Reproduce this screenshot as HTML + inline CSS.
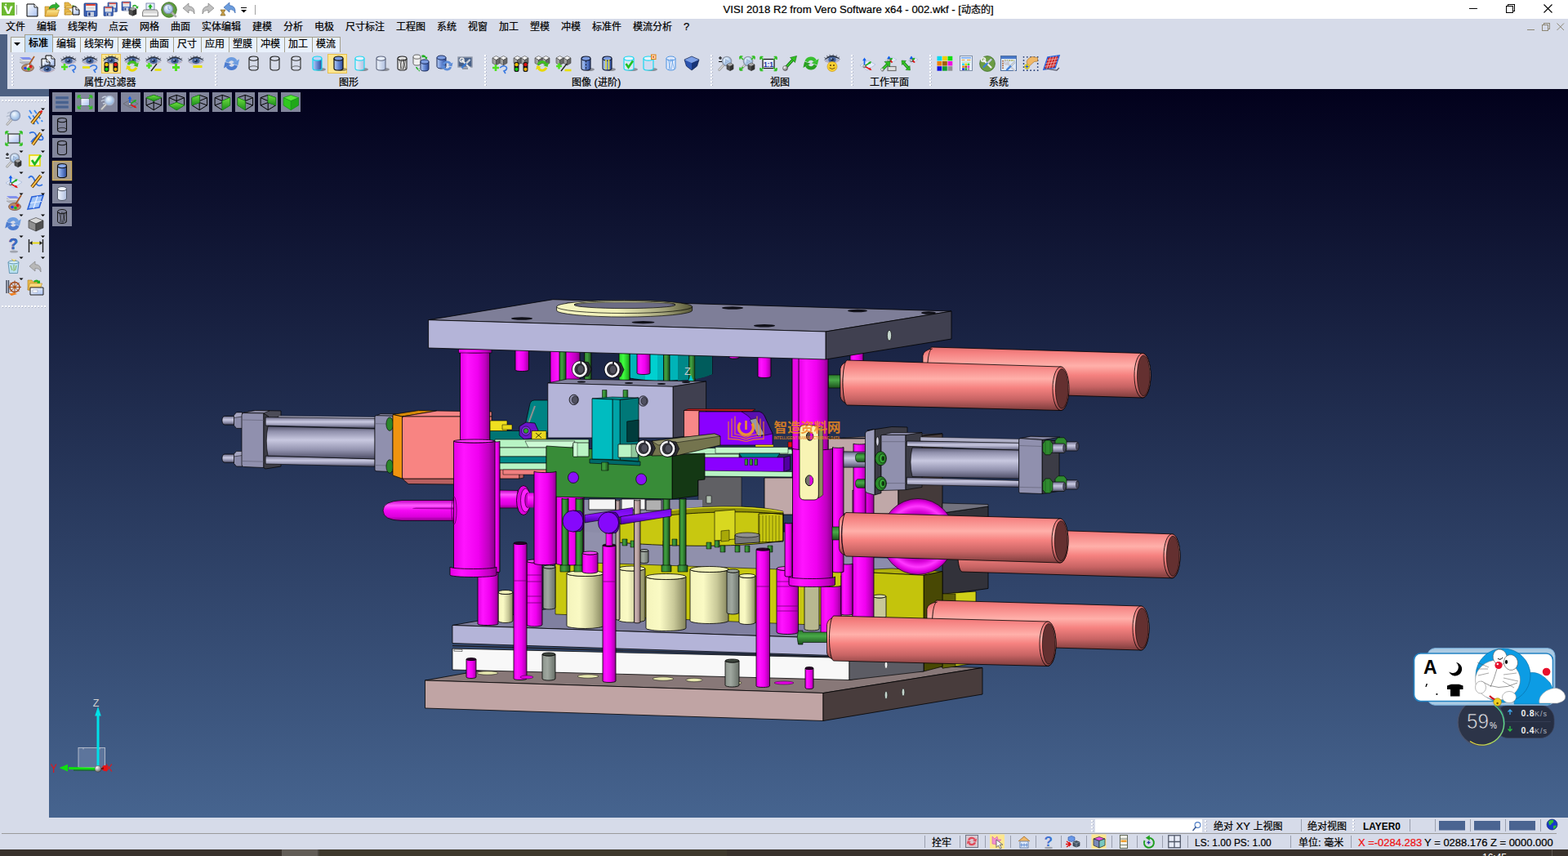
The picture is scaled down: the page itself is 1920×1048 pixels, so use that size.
<!DOCTYPE html>
<html lang="zh-CN"><head><meta charset="utf-8"><title>VISI 2018 R2 from Vero Software x64 - 002.wkf</title>
<style>
html,body{margin:0;padding:0;background:#d6dbe9;overflow:hidden}
body{width:1920px;height:1048px;position:relative;font-family:"Liberation Sans","Noto Sans CJK SC",sans-serif}
svg text{font-family:"Liberation Sans","Noto Sans CJK SC",sans-serif}
#app{position:absolute;left:0;top:0;width:1920px;height:1048px;display:block}
</style></head><body>
<svg id="app" width="1920" height="1048" viewBox="0 0 1920 1048">
<rect x="0" y="0" width="1920" height="23" fill="#fff"/>
<rect x="0" y="23" width="1920" height="86" fill="#d6dbe9"/>
<rect x="0" y="42" width="9" height="67" fill="#4d6082"/>
<rect x="0" y="109" width="60" height="9" fill="#4d6082"/>
<rect x="0" y="118" width="60" height="882" fill="#d6dbe9"/>
<rect x="0" y="1000" width="1920" height="40" fill="#d6dbe9"/>
<g fill="#000" stroke="#000" stroke-width="0.22"><text x="885.50" y="16.00" font-size="12.5" textLength="291.52" lengthAdjust="spacingAndGlyphs">VISI&#160;2018&#160;R2&#160;from&#160;Vero&#160;Software&#160;x64&#160;-&#160;002.wkf&#160;-&#160;[</text><text x="1177.02" y="16.00" font-size="12">动态的</text><text x="1213.02" y="16.00" font-size="12.5" textLength="3.64" lengthAdjust="spacingAndGlyphs">]</text></g>
<g stroke="#000" stroke-width="1" fill="none" shape-rendering="crispEdges"><path d="M1799 10.5H1809"/><path d="M1846.5 7.5V5.5H1854.5V13.5H1852.5"/><rect x="1844.5" y="7.5" width="8" height="8"/></g><path d="M1890.5 5.5L1900.5 15.5M1900.5 5.5L1890.5 15.5" stroke="#000" stroke-width="1.1" fill="none"/>
<g stroke="#8c8674" stroke-width="1" fill="none" shape-rendering="crispEdges"><path d="M1870 36.5H1879"/><path d="M1890.5 30.5V28.5H1897.5V35.5H1895.5"/><rect x="1888.5" y="30.5" width="7" height="7"/></g><path d="M1906.5 28.5L1915 37M1915 28.5L1906.5 37" stroke="#8c8674" stroke-width="1" fill="none"/>
<g fill="#000" stroke="#000" stroke-width="0.22"><text x="7.00" y="37.00" font-size="12">文件</text></g>
<g fill="#000" stroke="#000" stroke-width="0.22"><text x="45.00" y="37.00" font-size="12">编辑</text></g>
<g fill="#000" stroke="#000" stroke-width="0.22"><text x="83.00" y="37.00" font-size="12">线架构</text></g>
<g fill="#000" stroke="#000" stroke-width="0.22"><text x="133.00" y="37.00" font-size="12">点云</text></g>
<g fill="#000" stroke="#000" stroke-width="0.22"><text x="171.00" y="37.00" font-size="12">网格</text></g>
<g fill="#000" stroke="#000" stroke-width="0.22"><text x="209.00" y="37.00" font-size="12">曲面</text></g>
<g fill="#000" stroke="#000" stroke-width="0.22"><text x="247.00" y="37.00" font-size="12">实体编辑</text></g>
<g fill="#000" stroke="#000" stroke-width="0.22"><text x="309.00" y="37.00" font-size="12">建模</text></g>
<g fill="#000" stroke="#000" stroke-width="0.22"><text x="347.00" y="37.00" font-size="12">分析</text></g>
<g fill="#000" stroke="#000" stroke-width="0.22"><text x="385.00" y="37.00" font-size="12">电极</text></g>
<g fill="#000" stroke="#000" stroke-width="0.22"><text x="423.00" y="37.00" font-size="12">尺寸标注</text></g>
<g fill="#000" stroke="#000" stroke-width="0.22"><text x="485.00" y="37.00" font-size="12">工程图</text></g>
<g fill="#000" stroke="#000" stroke-width="0.22"><text x="535.00" y="37.00" font-size="12">系统</text></g>
<g fill="#000" stroke="#000" stroke-width="0.22"><text x="573.00" y="37.00" font-size="12">视窗</text></g>
<g fill="#000" stroke="#000" stroke-width="0.22"><text x="611.00" y="37.00" font-size="12">加工</text></g>
<g fill="#000" stroke="#000" stroke-width="0.22"><text x="649.00" y="37.00" font-size="12">塑模</text></g>
<g fill="#000" stroke="#000" stroke-width="0.22"><text x="687.00" y="37.00" font-size="12">冲模</text></g>
<g fill="#000" stroke="#000" stroke-width="0.22"><text x="725.00" y="37.00" font-size="12">标准件</text></g>
<g fill="#000" stroke="#000" stroke-width="0.22"><text x="775.00" y="37.00" font-size="12">模流分析</text></g>
<g fill="#000" stroke="#000" stroke-width="0.22"><text x="837.00" y="37.00" font-size="12.5" textLength="7.20" lengthAdjust="spacingAndGlyphs">?</text></g>
<rect x="13.5" y="45.5" width="17" height="19" fill="#e9f1fc" stroke="#a39f8c"/>
<path d="M17 52h8l-4 4z" fill="#000"/>
<rect x="30.5" y="42.5" width="34" height="22" fill="#c0dbf8" stroke="#a39f8c"/>
<g fill="#000" stroke="#000" stroke-width="0.0"><text x="35.00" y="57.00" font-size="12" font-weight="bold">标准</text></g>
<rect x="64.5" y="45.5" width="34" height="19" fill="#e9f1fc" stroke="#a39f8c"/>
<g fill="#000" stroke="#000" stroke-width="0.22"><text x="69.00" y="58.00" font-size="12">编辑</text></g>
<rect x="98.5" y="45.5" width="46" height="19" fill="#e9f1fc" stroke="#a39f8c"/>
<g fill="#000" stroke="#000" stroke-width="0.22"><text x="103.00" y="58.00" font-size="12">线架构</text></g>
<rect x="144.5" y="45.5" width="34" height="19" fill="#e9f1fc" stroke="#a39f8c"/>
<g fill="#000" stroke="#000" stroke-width="0.22"><text x="149.00" y="58.00" font-size="12">建模</text></g>
<rect x="178.5" y="45.5" width="34" height="19" fill="#e9f1fc" stroke="#a39f8c"/>
<g fill="#000" stroke="#000" stroke-width="0.22"><text x="183.00" y="58.00" font-size="12">曲面</text></g>
<rect x="212.5" y="45.5" width="34" height="19" fill="#e9f1fc" stroke="#a39f8c"/>
<g fill="#000" stroke="#000" stroke-width="0.22"><text x="217.00" y="58.00" font-size="12">尺寸</text></g>
<rect x="246.5" y="45.5" width="34" height="19" fill="#e9f1fc" stroke="#a39f8c"/>
<g fill="#000" stroke="#000" stroke-width="0.22"><text x="251.00" y="58.00" font-size="12">应用</text></g>
<rect x="280.5" y="45.5" width="34" height="19" fill="#e9f1fc" stroke="#a39f8c"/>
<g fill="#000" stroke="#000" stroke-width="0.22"><text x="285.00" y="58.00" font-size="12">塑膜</text></g>
<rect x="314.5" y="45.5" width="34" height="19" fill="#e9f1fc" stroke="#a39f8c"/>
<g fill="#000" stroke="#000" stroke-width="0.22"><text x="319.00" y="58.00" font-size="12">冲模</text></g>
<rect x="348.5" y="45.5" width="34" height="19" fill="#e9f1fc" stroke="#a39f8c"/>
<g fill="#000" stroke="#000" stroke-width="0.22"><text x="353.00" y="58.00" font-size="12">加工</text></g>
<rect x="382.5" y="45.5" width="34" height="19" fill="#e9f1fc" stroke="#a39f8c"/>
<g fill="#000" stroke="#000" stroke-width="0.22"><text x="387.00" y="58.00" font-size="12">模流</text></g>
<rect x="12" y="64" width="1908" height="45" fill="#d6dbe9"/>
<rect x="14" y="67" width="2" height="2" fill="#fff"/><rect x="16" y="68" width="1" height="1" fill="#a6abbd"/><rect x="14" y="71" width="2" height="2" fill="#fff"/><rect x="16" y="72" width="1" height="1" fill="#a6abbd"/><rect x="14" y="75" width="2" height="2" fill="#fff"/><rect x="16" y="76" width="1" height="1" fill="#a6abbd"/><rect x="14" y="79" width="2" height="2" fill="#fff"/><rect x="16" y="80" width="1" height="1" fill="#a6abbd"/><rect x="14" y="83" width="2" height="2" fill="#fff"/><rect x="16" y="84" width="1" height="1" fill="#a6abbd"/><rect x="14" y="87" width="2" height="2" fill="#fff"/><rect x="16" y="88" width="1" height="1" fill="#a6abbd"/><rect x="14" y="91" width="2" height="2" fill="#fff"/><rect x="16" y="92" width="1" height="1" fill="#a6abbd"/><rect x="14" y="95" width="2" height="2" fill="#fff"/><rect x="16" y="96" width="1" height="1" fill="#a6abbd"/><rect x="14" y="99" width="2" height="2" fill="#fff"/><rect x="16" y="100" width="1" height="1" fill="#a6abbd"/><rect x="14" y="103" width="2" height="2" fill="#fff"/><rect x="16" y="104" width="1" height="1" fill="#a6abbd"/>
<rect x="263" y="67" width="2" height="2" fill="#fff"/><rect x="265" y="68" width="1" height="1" fill="#a6abbd"/><rect x="263" y="71" width="2" height="2" fill="#fff"/><rect x="265" y="72" width="1" height="1" fill="#a6abbd"/><rect x="263" y="75" width="2" height="2" fill="#fff"/><rect x="265" y="76" width="1" height="1" fill="#a6abbd"/><rect x="263" y="79" width="2" height="2" fill="#fff"/><rect x="265" y="80" width="1" height="1" fill="#a6abbd"/><rect x="263" y="83" width="2" height="2" fill="#fff"/><rect x="265" y="84" width="1" height="1" fill="#a6abbd"/><rect x="263" y="87" width="2" height="2" fill="#fff"/><rect x="265" y="88" width="1" height="1" fill="#a6abbd"/><rect x="263" y="91" width="2" height="2" fill="#fff"/><rect x="265" y="92" width="1" height="1" fill="#a6abbd"/><rect x="263" y="95" width="2" height="2" fill="#fff"/><rect x="265" y="96" width="1" height="1" fill="#a6abbd"/><rect x="263" y="99" width="2" height="2" fill="#fff"/><rect x="265" y="100" width="1" height="1" fill="#a6abbd"/><rect x="263" y="103" width="2" height="2" fill="#fff"/><rect x="265" y="104" width="1" height="1" fill="#a6abbd"/>
<rect x="593" y="67" width="2" height="2" fill="#fff"/><rect x="595" y="68" width="1" height="1" fill="#a6abbd"/><rect x="593" y="71" width="2" height="2" fill="#fff"/><rect x="595" y="72" width="1" height="1" fill="#a6abbd"/><rect x="593" y="75" width="2" height="2" fill="#fff"/><rect x="595" y="76" width="1" height="1" fill="#a6abbd"/><rect x="593" y="79" width="2" height="2" fill="#fff"/><rect x="595" y="80" width="1" height="1" fill="#a6abbd"/><rect x="593" y="83" width="2" height="2" fill="#fff"/><rect x="595" y="84" width="1" height="1" fill="#a6abbd"/><rect x="593" y="87" width="2" height="2" fill="#fff"/><rect x="595" y="88" width="1" height="1" fill="#a6abbd"/><rect x="593" y="91" width="2" height="2" fill="#fff"/><rect x="595" y="92" width="1" height="1" fill="#a6abbd"/><rect x="593" y="95" width="2" height="2" fill="#fff"/><rect x="595" y="96" width="1" height="1" fill="#a6abbd"/><rect x="593" y="99" width="2" height="2" fill="#fff"/><rect x="595" y="100" width="1" height="1" fill="#a6abbd"/><rect x="593" y="103" width="2" height="2" fill="#fff"/><rect x="595" y="104" width="1" height="1" fill="#a6abbd"/>
<rect x="870" y="67" width="2" height="2" fill="#fff"/><rect x="872" y="68" width="1" height="1" fill="#a6abbd"/><rect x="870" y="71" width="2" height="2" fill="#fff"/><rect x="872" y="72" width="1" height="1" fill="#a6abbd"/><rect x="870" y="75" width="2" height="2" fill="#fff"/><rect x="872" y="76" width="1" height="1" fill="#a6abbd"/><rect x="870" y="79" width="2" height="2" fill="#fff"/><rect x="872" y="80" width="1" height="1" fill="#a6abbd"/><rect x="870" y="83" width="2" height="2" fill="#fff"/><rect x="872" y="84" width="1" height="1" fill="#a6abbd"/><rect x="870" y="87" width="2" height="2" fill="#fff"/><rect x="872" y="88" width="1" height="1" fill="#a6abbd"/><rect x="870" y="91" width="2" height="2" fill="#fff"/><rect x="872" y="92" width="1" height="1" fill="#a6abbd"/><rect x="870" y="95" width="2" height="2" fill="#fff"/><rect x="872" y="96" width="1" height="1" fill="#a6abbd"/><rect x="870" y="99" width="2" height="2" fill="#fff"/><rect x="872" y="100" width="1" height="1" fill="#a6abbd"/><rect x="870" y="103" width="2" height="2" fill="#fff"/><rect x="872" y="104" width="1" height="1" fill="#a6abbd"/>
<rect x="1042" y="67" width="2" height="2" fill="#fff"/><rect x="1044" y="68" width="1" height="1" fill="#a6abbd"/><rect x="1042" y="71" width="2" height="2" fill="#fff"/><rect x="1044" y="72" width="1" height="1" fill="#a6abbd"/><rect x="1042" y="75" width="2" height="2" fill="#fff"/><rect x="1044" y="76" width="1" height="1" fill="#a6abbd"/><rect x="1042" y="79" width="2" height="2" fill="#fff"/><rect x="1044" y="80" width="1" height="1" fill="#a6abbd"/><rect x="1042" y="83" width="2" height="2" fill="#fff"/><rect x="1044" y="84" width="1" height="1" fill="#a6abbd"/><rect x="1042" y="87" width="2" height="2" fill="#fff"/><rect x="1044" y="88" width="1" height="1" fill="#a6abbd"/><rect x="1042" y="91" width="2" height="2" fill="#fff"/><rect x="1044" y="92" width="1" height="1" fill="#a6abbd"/><rect x="1042" y="95" width="2" height="2" fill="#fff"/><rect x="1044" y="96" width="1" height="1" fill="#a6abbd"/><rect x="1042" y="99" width="2" height="2" fill="#fff"/><rect x="1044" y="100" width="1" height="1" fill="#a6abbd"/><rect x="1042" y="103" width="2" height="2" fill="#fff"/><rect x="1044" y="104" width="1" height="1" fill="#a6abbd"/>
<rect x="1138" y="67" width="2" height="2" fill="#fff"/><rect x="1140" y="68" width="1" height="1" fill="#a6abbd"/><rect x="1138" y="71" width="2" height="2" fill="#fff"/><rect x="1140" y="72" width="1" height="1" fill="#a6abbd"/><rect x="1138" y="75" width="2" height="2" fill="#fff"/><rect x="1140" y="76" width="1" height="1" fill="#a6abbd"/><rect x="1138" y="79" width="2" height="2" fill="#fff"/><rect x="1140" y="80" width="1" height="1" fill="#a6abbd"/><rect x="1138" y="83" width="2" height="2" fill="#fff"/><rect x="1140" y="84" width="1" height="1" fill="#a6abbd"/><rect x="1138" y="87" width="2" height="2" fill="#fff"/><rect x="1140" y="88" width="1" height="1" fill="#a6abbd"/><rect x="1138" y="91" width="2" height="2" fill="#fff"/><rect x="1140" y="92" width="1" height="1" fill="#a6abbd"/><rect x="1138" y="95" width="2" height="2" fill="#fff"/><rect x="1140" y="96" width="1" height="1" fill="#a6abbd"/><rect x="1138" y="99" width="2" height="2" fill="#fff"/><rect x="1140" y="100" width="1" height="1" fill="#a6abbd"/><rect x="1138" y="103" width="2" height="2" fill="#fff"/><rect x="1140" y="104" width="1" height="1" fill="#a6abbd"/>
<g fill="#000" stroke="#000" stroke-width="0.22"><text x="103.00" y="105.00" font-size="12">属性</text><text x="127.00" y="105.00" font-size="12.5" textLength="3.60" lengthAdjust="spacingAndGlyphs">/</text><text x="130.60" y="105.00" font-size="12">过滤器</text></g>
<g fill="#000" stroke="#000" stroke-width="0.22"><text x="415.00" y="105.00" font-size="12">图形</text></g>
<g fill="#000" stroke="#000" stroke-width="0.22"><text x="700.00" y="105.00" font-size="12">图像</text><text x="724.00" y="105.00" font-size="12.5" textLength="7.91" lengthAdjust="spacingAndGlyphs">&#160;(</text><text x="731.91" y="105.00" font-size="12">进阶</text><text x="755.91" y="105.00" font-size="12.5" textLength="4.31" lengthAdjust="spacingAndGlyphs">)</text></g>
<g fill="#000" stroke="#000" stroke-width="0.22"><text x="943.00" y="105.00" font-size="12">视图</text></g>
<g fill="#000" stroke="#000" stroke-width="0.22"><text x="1065.00" y="105.00" font-size="12">工作平面</text></g>
<g fill="#000" stroke="#000" stroke-width="0.22"><text x="1211.00" y="105.00" font-size="12">系统</text></g>
<rect x="2" y="122" width="2" height="2" fill="#fff"/><rect x="3" y="124" width="1" height="1" fill="#a6abbd"/><rect x="6" y="122" width="2" height="2" fill="#fff"/><rect x="7" y="124" width="1" height="1" fill="#a6abbd"/><rect x="10" y="122" width="2" height="2" fill="#fff"/><rect x="11" y="124" width="1" height="1" fill="#a6abbd"/><rect x="14" y="122" width="2" height="2" fill="#fff"/><rect x="15" y="124" width="1" height="1" fill="#a6abbd"/><rect x="18" y="122" width="2" height="2" fill="#fff"/><rect x="19" y="124" width="1" height="1" fill="#a6abbd"/><rect x="22" y="122" width="2" height="2" fill="#fff"/><rect x="23" y="124" width="1" height="1" fill="#a6abbd"/><rect x="26" y="122" width="2" height="2" fill="#fff"/><rect x="27" y="124" width="1" height="1" fill="#a6abbd"/><rect x="30" y="122" width="2" height="2" fill="#fff"/><rect x="31" y="124" width="1" height="1" fill="#a6abbd"/><rect x="34" y="122" width="2" height="2" fill="#fff"/><rect x="35" y="124" width="1" height="1" fill="#a6abbd"/><rect x="38" y="122" width="2" height="2" fill="#fff"/><rect x="39" y="124" width="1" height="1" fill="#a6abbd"/><rect x="42" y="122" width="2" height="2" fill="#fff"/><rect x="43" y="124" width="1" height="1" fill="#a6abbd"/><rect x="46" y="122" width="2" height="2" fill="#fff"/><rect x="47" y="124" width="1" height="1" fill="#a6abbd"/><rect x="50" y="122" width="2" height="2" fill="#fff"/><rect x="51" y="124" width="1" height="1" fill="#a6abbd"/><rect x="54" y="122" width="2" height="2" fill="#fff"/><rect x="55" y="124" width="1" height="1" fill="#a6abbd"/>
<rect x="2" y="374" width="2" height="2" fill="#fff"/><rect x="3" y="376" width="1" height="1" fill="#a6abbd"/><rect x="6" y="374" width="2" height="2" fill="#fff"/><rect x="7" y="376" width="1" height="1" fill="#a6abbd"/><rect x="10" y="374" width="2" height="2" fill="#fff"/><rect x="11" y="376" width="1" height="1" fill="#a6abbd"/><rect x="14" y="374" width="2" height="2" fill="#fff"/><rect x="15" y="376" width="1" height="1" fill="#a6abbd"/><rect x="18" y="374" width="2" height="2" fill="#fff"/><rect x="19" y="376" width="1" height="1" fill="#a6abbd"/><rect x="22" y="374" width="2" height="2" fill="#fff"/><rect x="23" y="376" width="1" height="1" fill="#a6abbd"/><rect x="26" y="374" width="2" height="2" fill="#fff"/><rect x="27" y="376" width="1" height="1" fill="#a6abbd"/><rect x="30" y="374" width="2" height="2" fill="#fff"/><rect x="31" y="376" width="1" height="1" fill="#a6abbd"/><rect x="34" y="374" width="2" height="2" fill="#fff"/><rect x="35" y="376" width="1" height="1" fill="#a6abbd"/><rect x="38" y="374" width="2" height="2" fill="#fff"/><rect x="39" y="376" width="1" height="1" fill="#a6abbd"/><rect x="42" y="374" width="2" height="2" fill="#fff"/><rect x="43" y="376" width="1" height="1" fill="#a6abbd"/><rect x="46" y="374" width="2" height="2" fill="#fff"/><rect x="47" y="376" width="1" height="1" fill="#a6abbd"/><rect x="50" y="374" width="2" height="2" fill="#fff"/><rect x="51" y="376" width="1" height="1" fill="#a6abbd"/><rect x="54" y="374" width="2" height="2" fill="#fff"/><rect x="55" y="376" width="1" height="1" fill="#a6abbd"/>
<rect x="2" y="1020" width="1904" height="1" fill="#9a9a9a"/>
<rect x="1336" y="1004" width="2" height="2" fill="#fff"/><rect x="1338" y="1005" width="1" height="1" fill="#a6abbd"/><rect x="1336" y="1008" width="2" height="2" fill="#fff"/><rect x="1338" y="1009" width="1" height="1" fill="#a6abbd"/><rect x="1336" y="1012" width="2" height="2" fill="#fff"/><rect x="1338" y="1013" width="1" height="1" fill="#a6abbd"/><rect x="1336" y="1016" width="2" height="2" fill="#fff"/><rect x="1338" y="1017" width="1" height="1" fill="#a6abbd"/>
<rect x="1341" y="1003" width="131" height="16" fill="#fff"/>
<circle cx="1466.5" cy="1010" r="3.4" fill="none" stroke="#4b7bc5" stroke-width="1.1"/><path d="M1464.3 1012.600l-3.300 4" stroke="#3b5b95" stroke-width="1.5" stroke-linecap="round"/>
<rect x="1475" y="1004" width="2" height="2" fill="#fff"/><rect x="1477" y="1005" width="1" height="1" fill="#a6abbd"/><rect x="1475" y="1008" width="2" height="2" fill="#fff"/><rect x="1477" y="1009" width="1" height="1" fill="#a6abbd"/><rect x="1475" y="1012" width="2" height="2" fill="#fff"/><rect x="1477" y="1013" width="1" height="1" fill="#a6abbd"/><rect x="1475" y="1016" width="2" height="2" fill="#fff"/><rect x="1477" y="1017" width="1" height="1" fill="#a6abbd"/>
<g fill="#000" stroke="#000" stroke-width="0.22"><text x="1486.00" y="1016.00" font-size="12">绝对</text><text x="1510.00" y="1016.00" font-size="12.5" textLength="24.47" lengthAdjust="spacingAndGlyphs">&#160;XY&#160;</text><text x="1534.47" y="1016.00" font-size="12">上视图</text></g>
<rect x="1593.0" y="1003" width="1" height="15" fill="#9a9fae"/>
<g fill="#000" stroke="#000" stroke-width="0.22"><text x="1601.00" y="1016.00" font-size="12">绝对视图</text></g>
<rect x="1656" y="1003" width="2" height="2" fill="#fff"/><rect x="1658" y="1004" width="1" height="1" fill="#a6abbd"/><rect x="1656" y="1007" width="2" height="2" fill="#fff"/><rect x="1658" y="1008" width="1" height="1" fill="#a6abbd"/><rect x="1656" y="1011" width="2" height="2" fill="#fff"/><rect x="1658" y="1012" width="1" height="1" fill="#a6abbd"/><rect x="1656" y="1015" width="2" height="2" fill="#fff"/><rect x="1658" y="1016" width="1" height="1" fill="#a6abbd"/>
<g fill="#000" stroke="#000" stroke-width="0.0"><text x="1669.00" y="1016.00" font-size="12.5" textLength="45.86" lengthAdjust="spacingAndGlyphs" font-weight="bold">LAYER0</text></g>
<rect x="1726.0" y="1003" width="1" height="15" fill="#9a9fae"/>
<rect x="1757.0" y="1003" width="1" height="15" fill="#9a9fae"/>
<rect x="1800.0" y="1003" width="1" height="15" fill="#9a9fae"/>
<rect x="1843.0" y="1003" width="1" height="15" fill="#9a9fae"/>
<rect x="1886.0" y="1003" width="1" height="15" fill="#9a9fae"/>
<rect x="1762" y="1005" width="32" height="11.5" fill="#4a6491"/>
<rect x="1805" y="1005" width="32" height="11.5" fill="#4a6491"/>
<rect x="1848" y="1005" width="32" height="11.5" fill="#4a6491"/>
<rect x="1132.0" y="1023" width="1" height="15" fill="#9a9fae"/>
<rect x="1175.0" y="1023" width="1" height="15" fill="#9a9fae"/>
<rect x="1206.0" y="1023" width="1" height="15" fill="#9a9fae"/>
<rect x="1237.0" y="1023" width="1" height="15" fill="#9a9fae"/>
<rect x="1268.0" y="1023" width="1" height="15" fill="#9a9fae"/>
<rect x="1299.0" y="1023" width="1" height="15" fill="#9a9fae"/>
<rect x="1330.0" y="1023" width="1" height="15" fill="#9a9fae"/>
<rect x="1361.0" y="1023" width="1" height="15" fill="#9a9fae"/>
<rect x="1392.0" y="1023" width="1" height="15" fill="#9a9fae"/>
<rect x="1423.0" y="1023" width="1" height="15" fill="#9a9fae"/>
<rect x="1454.0" y="1023" width="1" height="15" fill="#9a9fae"/>
<rect x="1580.0" y="1023" width="1" height="15" fill="#9a9fae"/>
<rect x="1654.0" y="1023" width="1" height="15" fill="#9a9fae"/>
<g fill="#000" stroke="#000" stroke-width="0.22"><text x="1141.00" y="1036.00" font-size="12">拴牢</text></g>
<g fill="#000" stroke="#000" stroke-width="0.22"><text x="1463.00" y="1036.00" font-size="12.5" textLength="93.77" lengthAdjust="spacingAndGlyphs">LS:&#160;1.00&#160;PS:&#160;1.00</text></g>
<g fill="#000" stroke="#000" stroke-width="0.22"><text x="1590.00" y="1036.00" font-size="12">单位</text><text x="1614.00" y="1036.00" font-size="12.5" textLength="7.20" lengthAdjust="spacingAndGlyphs">:&#160;</text><text x="1621.20" y="1036.00" font-size="12">毫米</text></g>
<g fill="#f01010" stroke="#f01010" stroke-width="0.22"><text x="1663.00" y="1036.00" font-size="12.5" textLength="78.12" lengthAdjust="spacingAndGlyphs">X&#160;=-0284.283</text></g>
<g fill="#000" stroke="#000" stroke-width="0.22"><text x="1744.00" y="1036.00" font-size="12.5" textLength="157.69" lengthAdjust="spacingAndGlyphs">Y&#160;=&#160;0288.176&#160;Z&#160;=&#160;0000.000</text></g>
<rect x="0" y="1040" width="1920" height="8" fill="#39322c"/>
<rect x="390" y="1040" width="500" height="8" fill="#423d2e" opacity=".6"/>
<rect x="345" y="1040" width="44" height="8" fill="#625d57"/><rect x="389" y="1040" width="2" height="8" fill="#4a4640"/>
<rect x="1900" y="1040" width="1" height="8" fill="#5a554f"/>
<text x="1815" y="1053.5" font-size="12" fill="#fff">16:45</text>
<defs><linearGradient id="vpg" x1="0" y1="0" x2="0" y2="1"><stop offset="0" stop-color="#02011c"/><stop offset="1" stop-color="#46648f"/></linearGradient></defs>
<rect x="60" y="109" width="1860" height="892" fill="url(#vpg)"/>
<defs><linearGradient id="gMag" x1="0" y1="0" x2="1" y2="0"><stop offset="0" stop-color="#e400e4"/><stop offset="0.25" stop-color="#ff14ff"/><stop offset="0.6" stop-color="#f000f0"/><stop offset="0.85" stop-color="#c000c0"/><stop offset="1" stop-color="#8a008a"/></linearGradient><linearGradient id="gMagH" x1="0" y1="0" x2="0" y2="1"><stop offset="0" stop-color="#e400e4"/><stop offset="0.3" stop-color="#ff30ff"/><stop offset="0.7" stop-color="#e800e8"/><stop offset="1" stop-color="#a000a0"/></linearGradient><linearGradient id="gSal" x1="0" y1="0" x2="0" y2="1"><stop offset="0" stop-color="#e07070"/><stop offset="0.1" stop-color="#f47e7e"/><stop offset="0.37" stop-color="#ffb0aa"/><stop offset="0.55" stop-color="#f68280"/><stop offset="0.78" stop-color="#c86464"/><stop offset="1" stop-color="#7c3c3c"/></linearGradient><linearGradient id="gSteel" x1="0" y1="0" x2="0" y2="1"><stop offset="0" stop-color="#54546c"/><stop offset="0.16" stop-color="#9090ac"/><stop offset="0.42" stop-color="#c8c8e0"/><stop offset="0.72" stop-color="#9494b0"/><stop offset="1" stop-color="#4c4c64"/></linearGradient><linearGradient id="gCream" x1="0" y1="0" x2="1" y2="0"><stop offset="0" stop-color="#f4f4bc"/><stop offset="0.35" stop-color="#fafac4"/><stop offset="0.7" stop-color="#c8c898"/><stop offset="1" stop-color="#84845c"/></linearGradient><linearGradient id="gGrey" x1="0" y1="0" x2="1" y2="0"><stop offset="0" stop-color="#8c948c"/><stop offset="0.4" stop-color="#a0a8a0"/><stop offset="1" stop-color="#687068"/></linearGradient><linearGradient id="gGrn" x1="0" y1="0" x2="1" y2="0"><stop offset="0" stop-color="#308030"/><stop offset="0.4" stop-color="#40a040"/><stop offset="1" stop-color="#1c501c"/></linearGradient><linearGradient id="gGrnH" x1="0" y1="0" x2="0" y2="1"><stop offset="0" stop-color="#2c7c2c"/><stop offset="0.4" stop-color="#48a848"/><stop offset="1" stop-color="#1c501c"/></linearGradient><linearGradient id="gPinkR" x1="0" y1="0" x2="1" y2="0"><stop offset="0" stop-color="#b09898"/><stop offset="0.4" stop-color="#c8b0b0"/><stop offset="1" stop-color="#8c7474"/></linearGradient><linearGradient id="gSteelV" x1="0" y1="0" x2="1" y2="0"><stop offset="0" stop-color="#8c8ca8"/><stop offset="0.5" stop-color="#a4a4c0"/><stop offset="1" stop-color="#787890"/></linearGradient><linearGradient id="mg11" x1="0" y1="0" x2="1" y2="0"><stop offset="0" stop-color="#28d028"/><stop offset="0.4" stop-color="#40ff40"/><stop offset="1" stop-color="#18a018"/></linearGradient><linearGradient id="mg12" x1="0" y1="0" x2="0" y2="1"><stop offset="0" stop-color="#7008e0"/><stop offset="0.5" stop-color="#8a10ff"/><stop offset="1" stop-color="#4800a0"/></linearGradient><linearGradient id="mg13" x1="0" y1="0" x2="0" y2="1"><stop offset="0" stop-color="#c000c0"/><stop offset="0.25" stop-color="#ff58ff"/><stop offset="0.5" stop-color="#f408f4"/><stop offset="0.8" stop-color="#dc00dc"/><stop offset="1" stop-color="#900090"/></linearGradient><radialGradient id="gTor" gradientUnits="userSpaceOnUse" cx="1124" cy="657" r="46.5"><stop offset="0.5" stop-color="#980098"/><stop offset="0.66" stop-color="#d800d8"/><stop offset="0.8" stop-color="#ff38ff"/><stop offset="0.92" stop-color="#e000e0"/><stop offset="1" stop-color="#a000a0"/></radialGradient><linearGradient id="mg14" x1="0" y1="0" x2="1" y2="0"><stop offset="0" stop-color="#f4f4c0"/><stop offset="0.45" stop-color="#f0f0b8"/><stop offset="0.8" stop-color="#a0a078"/><stop offset="1" stop-color="#585838"/></linearGradient></defs>
<g id="model">
<path d="M936.0 585.0 971.0 585.0 971.0 630.0 936.0 630.0Z" fill="#c0a8a8" stroke="#000" stroke-width="0.8" stroke-linejoin="round"/>
<path d="M1014.0 537.0 1069.0 534.0 1154.0 531.0 1100.0 535.0Z" fill="#d0b8b8" stroke="#000" stroke-width="0.6" stroke-linejoin="round"/>
<path d="M1014.0 537.0 1100.0 537.0 1100.0 629.0 1014.0 629.0Z" fill="#c0a8a8" stroke="#000" stroke-width="0.8" stroke-linejoin="round"/>
<path d="M1100.0 537.0 1154.0 531.0 1154.0 626.0 1100.0 629.0Z" fill="#443a3a" stroke="#000" stroke-width="0.8" stroke-linejoin="round"/>
<path d="M1066.0 683.0 1100.0 684.0 1100.0 699.0 1066.0 699.0Z" fill="#8c8cac" stroke="#000" stroke-width="0" stroke-linejoin="round"/>
<path d="M1154.0 628.0 1210.0 620.0 1210.0 720.5 1154.0 728.0Z" fill="#32323a" stroke="#000" stroke-width="0.8" stroke-linejoin="round"/>
<path d="M1154.0 616.0 1210.0 617.5 1210.0 620.0 1157.5 627.5 1154.0 628.0Z" fill="#72727e" stroke="#000" stroke-width="0.6" stroke-linejoin="round"/>
<path d="M520.5 833.0 690.0 803.0 1203.0 817.5 1008.0 848.5Z" fill="#887878" stroke="#000" stroke-width="0.8" stroke-linejoin="round"/>
<path d="M520.5 833.0 1008.0 848.5 1008.0 882.5 520.5 867.0Z" fill="#c0a4a4" stroke="#000" stroke-width="0.8" stroke-linejoin="round"/>
<path d="M1008.0 848.5 1203.0 817.5 1203.0 850.0 1008.0 882.5Z" fill="#483c3c" stroke="#000" stroke-width="0.8" stroke-linejoin="round"/>
<ellipse cx="1085.0" cy="851.0" rx="1.8" ry="4.6" fill="#c4d4cc" stroke="#000" stroke-width="0.5"/>
<ellipse cx="1106.0" cy="847.5" rx="1.8" ry="4.6" fill="#c4d4cc" stroke="#000" stroke-width="0.5"/>
<ellipse cx="597.0" cy="824.0" rx="13.0" ry="2.2" fill="#e8e8b0" stroke="#000" stroke-width="0.5"/>
<ellipse cx="720.0" cy="828.0" rx="13.0" ry="2.2" fill="#e8e8b0" stroke="#000" stroke-width="0.5"/>
<ellipse cx="812.0" cy="831.0" rx="13.0" ry="2.2" fill="#e8e8b0" stroke="#000" stroke-width="0.5"/>
<ellipse cx="850.0" cy="832.5" rx="10.0" ry="2.2" fill="#e8e8b0" stroke="#000" stroke-width="0.5"/>
<ellipse cx="900.0" cy="836.0" rx="8.0" ry="2.2" fill="#e8e8b0" stroke="#000" stroke-width="0.5"/>
<path d="M1040.0 805.0 1135.0 788.0 1135.0 815.0 1040.0 832.5Z" fill="#5c5c64" stroke="#000" stroke-width="0.8" stroke-linejoin="round"/>
<ellipse cx="1085.0" cy="814.0" rx="1.8" ry="4.2" fill="#f4f4f4" stroke="#000" stroke-width="0.4"/>
<path d="M554.0 794.0 1040.0 805.5 1040.0 832.5 554.0 820.0Z" fill="#f8f8f8" stroke="#000" stroke-width="0.8" stroke-linejoin="round"/>
<path d="M556.0 795.0 566.0 795.3 566.0 797.5 556.0 797.2Z" fill="#fff" stroke="#000" stroke-width="0.5" stroke-linejoin="round"/>
<path d="M554.0 765.5 690.0 742.0 1160.0 756.0 1035.0 782.0Z" fill="#8080a0" stroke="#000" stroke-width="0.8" stroke-linejoin="round"/>
<path d="M1035.0 782.0 1160.0 756.0 1160.0 778.0 1035.0 803.0Z" fill="#404050" stroke="#000" stroke-width="0.8" stroke-linejoin="round"/>
<path d="M554.0 765.5 1035.0 782.0 1035.0 803.0 554.0 787.5Z" fill="#b4b4d8" stroke="#000" stroke-width="0.8" stroke-linejoin="round"/>
<path d="M554.0 790.5 1035.0 804.5" fill="none" stroke="#202028" stroke-width="1.6"/>
<path d="M1154.0 727.0 1195.0 724.0 1195.0 812.0 1154.0 818.0Z" fill="#d0d018" stroke="#000" stroke-width="0.7" stroke-linejoin="round"/>
<path d="M1154.0 727.0 1170.0 727.0 1170.0 816.0 1154.0 818.0Z" fill="#606008" stroke="#000" stroke-width="0.5" stroke-linejoin="round"/>
<path d="M1046.0 698.0 1092.0 696.0 1154.0 699.6 1131.0 704.3 1046.0 700.0Z" fill="#b0b00c" stroke="#000" stroke-width="0.6" stroke-linejoin="round"/>
<path d="M1131.0 704.3 1154.0 699.6 1154.0 816.0 1131.0 822.0Z" fill="#484804" stroke="#000" stroke-width="0.7" stroke-linejoin="round"/>
<path d="M1046.0 700.0 1131.0 704.3 1131.0 822.0 1046.0 822.0Z" fill="#c4c40c" stroke="#000" stroke-width="0.7" stroke-linejoin="round"/>
<path d="M1040.0 806.0 1131.0 790.0 1131.0 822.0 1040.0 832.5Z" fill="#5c5c64" stroke="#000" stroke-width="0.7" stroke-linejoin="round"/>
<ellipse cx="1085.0" cy="814.0" rx="1.8" ry="4.2" fill="#f4f4f4" stroke="#000" stroke-width="0.4"/>
<path d="M660.0 640.0 1069.0 655.0 1069.0 702.0 660.0 689.0Z" fill="#9090ac" stroke="#000" stroke-width="0.5" stroke-linejoin="round"/>
<path d="M680.0 687.5 1069.0 701.0 1069.0 768.0 680.0 752.0Z" fill="#c8c810" stroke="#000" stroke-width="0.6" stroke-linejoin="round"/>
<path d="M855.0 584.0 908.0 584.0 908.0 622.0 855.0 622.0Z" fill="#606064" stroke="#000" stroke-width="0.5" stroke-linejoin="round"/>
<path d="M700.0 612.0 860.0 612.0 860.0 660.0 700.0 650.0Z" fill="#8c8ca8" stroke="#000" stroke-width="0" stroke-linejoin="round"/>
<path d="M780 634 C830 618 920 616 959 626 L959 632 C900 624 830 628 780 640Z" fill="#909008" stroke="#000" stroke-width="0.5" stroke-linejoin="round"/>
<path d="M800 628 C850 619 920 619 959 627" fill="none" stroke="#e0e020" stroke-width="1.2" stroke-linejoin="round"/>
<path d="M757 642 C790 630 900 622 959 630 L959 662 C900 672 800 668 757 664Z" fill="#c8c810" stroke="#000" stroke-width="0.8" stroke-linejoin="round"/>
<path d="M875.0 626.0 900.0 624.0 900.0 660.0 875.0 662.0Z" fill="#d8d820" stroke="#000" stroke-width="0.6" stroke-linejoin="round"/>
<path d="M883.0 650.0 893.0 649.0 893.0 662.0 883.0 663.0Z" fill="#a8a808" stroke="#000" stroke-width="0.5" stroke-linejoin="round"/>
<path d="M930.0 631.0 930.0 664.0" fill="none" stroke="#606000" stroke-width="0.7"/>
<path d="M934.0 631.0 934.0 664.0" fill="none" stroke="#606000" stroke-width="0.7"/>
<path d="M938.0 631.0 938.0 664.0" fill="none" stroke="#606000" stroke-width="0.7"/>
<path d="M942.0 631.0 942.0 664.0" fill="none" stroke="#606000" stroke-width="0.7"/>
<path d="M946.0 631.0 946.0 664.0" fill="none" stroke="#606000" stroke-width="0.7"/>
<path d="M950.0 631.0 950.0 664.0" fill="none" stroke="#606000" stroke-width="0.7"/>
<path d="M954.0 631.0 954.0 664.0" fill="none" stroke="#606000" stroke-width="0.7"/>
<path d="M929.0 629.0 959.0 628.0 959.0 663.0 929.0 664.0Z" fill="none" stroke="#000" stroke-width="0.8" stroke-linejoin="round"/>
<path d="M900.0 655.0 930.0 654.0 930.0 664.0 900.0 666.0Z" fill="#787878" stroke="#000" stroke-width="0.8" stroke-linejoin="round"/>
<ellipse cx="915.0" cy="655.0" rx="15.0" ry="3.0" fill="#909090" stroke="#000" stroke-width="0.6"/>
<path d="M762.0 660.0 768.0 660.0 768.0 668.0 762.0 668.0Z" fill="url(#gGrn)" stroke="#000" stroke-width="0.5" stroke-linejoin="round"/>
<path d="M772.0 662.0 778.0 662.0 778.0 670.0 772.0 670.0Z" fill="url(#gGrn)" stroke="#000" stroke-width="0.5" stroke-linejoin="round"/>
<path d="M812.0 662.0 818.0 662.0 818.0 670.0 812.0 670.0Z" fill="url(#gGrn)" stroke="#000" stroke-width="0.5" stroke-linejoin="round"/>
<path d="M823.0 660.0 829.0 660.0 829.0 668.0 823.0 668.0Z" fill="url(#gGrn)" stroke="#000" stroke-width="0.5" stroke-linejoin="round"/>
<path d="M865.0 664.0 871.0 664.0 871.0 672.0 865.0 672.0Z" fill="url(#gGrn)" stroke="#000" stroke-width="0.5" stroke-linejoin="round"/>
<path d="M875.0 662.0 881.0 662.0 881.0 670.0 875.0 670.0Z" fill="url(#gGrn)" stroke="#000" stroke-width="0.5" stroke-linejoin="round"/>
<path d="M882.0 668.0 888.0 668.0 888.0 676.0 882.0 676.0Z" fill="url(#gGrn)" stroke="#000" stroke-width="0.5" stroke-linejoin="round"/>
<path d="M900.0 668.0 906.0 668.0 906.0 676.0 900.0 676.0Z" fill="url(#gGrn)" stroke="#000" stroke-width="0.5" stroke-linejoin="round"/>
<path d="M912.0 668.0 918.0 668.0 918.0 676.0 912.0 676.0Z" fill="url(#gGrn)" stroke="#000" stroke-width="0.5" stroke-linejoin="round"/>
<path d="M940.0 668.0 946.0 668.0 946.0 676.0 940.0 676.0Z" fill="url(#gGrn)" stroke="#000" stroke-width="0.5" stroke-linejoin="round"/>
<path d="M721.0 611.0 753.5 611.0 753.5 624.0 721.0 624.0Z" fill="#f4f4f4" stroke="#000" stroke-width="0.8" stroke-linejoin="round"/>
<path d="M761.0 611.0 790.0 611.0 790.0 624.0 761.0 624.0Z" fill="#f4f4f4" stroke="#000" stroke-width="0.8" stroke-linejoin="round"/>
<path d="M791.0 612.0 810.0 612.0 810.0 625.0 791.0 625.0Z" fill="#b0b0b0" stroke="#000" stroke-width="0.8" stroke-linejoin="round"/>
<path d="M865.0 607.0 871.0 607.0 871.0 616.0 865.0 616.0Z" fill="#b0c0b0" stroke="#000" stroke-width="0.5" stroke-linejoin="round"/>
<path d="M610.0 725.0 L610.0 760.0 A9.0 2.5 0 0 0 628.0 760.0 L628.0 725.0 A9.0 2.5 0 0 1 610.0 725.0 Z" fill="url(#gCream)" stroke="#000" stroke-width="0.8" stroke-linejoin="round"/>
<ellipse cx="619.0" cy="725.0" rx="9.0" ry="2.5" fill="#f0f0b8" stroke="#000" stroke-width="0.8"/>
<path d="M757.0 696.0 L757.0 759.0 A16.5 3.0 0 0 0 790.0 759.0 L790.0 696.0 A16.5 3.0 0 0 1 757.0 696.0 Z" fill="url(#gCream)" stroke="#000" stroke-width="0.8" stroke-linejoin="round"/>
<ellipse cx="773.5" cy="696.0" rx="16.5" ry="3.0" fill="#f0f0b8" stroke="#000" stroke-width="0.8"/>
<path d="M845.0 697.0 L845.0 760.0 A23.5 3.5 0 0 0 892.0 760.0 L892.0 697.0 A23.5 3.5 0 0 1 845.0 697.0 Z" fill="url(#gCream)" stroke="#000" stroke-width="0.8" stroke-linejoin="round"/>
<ellipse cx="868.5" cy="697.0" rx="23.5" ry="3.5" fill="#f0f0b8" stroke="#000" stroke-width="0.8"/>
<path d="M890.0 699.0 L890.0 750.0 A7.5 2.0 0 0 0 905.0 750.0 L905.0 699.0 A7.5 2.0 0 0 1 890.0 699.0 Z" fill="url(#gGrey)" stroke="#000" stroke-width="0.8" stroke-linejoin="round"/>
<ellipse cx="897.5" cy="699.0" rx="7.5" ry="2.0" fill="#a0a8a0" stroke="#000" stroke-width="0.8"/>
<path d="M694.0 702.0 L694.0 766.0 A22.5 3.5 0 0 0 739.0 766.0 L739.0 702.0 A22.5 3.5 0 0 1 694.0 702.0 Z" fill="url(#gCream)" stroke="#000" stroke-width="0.8" stroke-linejoin="round"/>
<ellipse cx="716.5" cy="702.0" rx="22.5" ry="3.5" fill="#f0f0b8" stroke="#000" stroke-width="0.8"/>
<path d="M791.0 706.0 L791.0 769.0 A24.5 3.5 0 0 0 840.0 769.0 L840.0 706.0 A24.5 3.5 0 0 1 791.0 706.0 Z" fill="url(#gCream)" stroke="#000" stroke-width="0.8" stroke-linejoin="round"/>
<ellipse cx="815.5" cy="706.0" rx="24.5" ry="3.5" fill="#f0f0b8" stroke="#000" stroke-width="0.8"/>
<path d="M905.0 705.0 L905.0 762.0 A10.0 2.5 0 0 0 925.0 762.0 L925.0 705.0 A10.0 2.5 0 0 1 905.0 705.0 Z" fill="url(#gCream)" stroke="#000" stroke-width="0.8" stroke-linejoin="round"/>
<ellipse cx="915.0" cy="705.0" rx="10.0" ry="2.5" fill="#f0f0b8" stroke="#000" stroke-width="0.8"/>
<path d="M985.0 708.0 L985.0 770.0 A9.0 2.0 0 0 0 1003.0 770.0 L1003.0 708.0 A9.0 2.0 0 0 1 985.0 708.0 Z" fill="#b8b890" stroke="#000" stroke-width="0.8" stroke-linejoin="round"/>
<path d="M1030.0 705.0 L1030.0 755.0 A7.0 2.0 0 0 0 1044.0 755.0 L1044.0 705.0 A7.0 2.0 0 0 1 1030.0 705.0 Z" fill="#b8b890" stroke="#000" stroke-width="0.8" stroke-linejoin="round"/>
<ellipse cx="1037.0" cy="705.0" rx="7.0" ry="2.0" fill="#d0d0a0" stroke="#000" stroke-width="0.8"/>
<path d="M1069.0 730.0 L1069.0 755.0 A8.0 2.0 0 0 0 1085.0 755.0 L1085.0 730.0 A8.0 2.0 0 0 1 1069.0 730.0 Z" fill="#c8c898" stroke="#000" stroke-width="0.8" stroke-linejoin="round"/>
<ellipse cx="1077.0" cy="730.0" rx="8.0" ry="2.0" fill="#e0e0b0" stroke="#000" stroke-width="0.8"/>
<path d="M665.0 694.0 L665.0 744.0 A7.5 2.0 0 0 0 680.0 744.0 L680.0 694.0 A7.5 2.0 0 0 1 665.0 694.0 Z" fill="url(#gGrey)" stroke="#000" stroke-width="0.8" stroke-linejoin="round"/>
<ellipse cx="672.5" cy="694.0" rx="7.5" ry="2.0" fill="#a0a8a0" stroke="#000" stroke-width="0.8"/>
<path d="M783.7 674.0 L783.7 688.0 A5.1 1.5 0 0 0 794.0 688.0 L794.0 674.0 A5.1 1.5 0 0 1 783.7 674.0 Z" fill="url(#gGrey)" stroke="#000" stroke-width="0.8" stroke-linejoin="round"/>
<ellipse cx="788.9" cy="674.0" rx="5.1" ry="1.5" fill="#a0a8a0" stroke="#000" stroke-width="0.8"/>
<path d="M754.0 612.0 L754.0 758.0 A2.5 1.0 0 0 0 759.0 758.0 L759.0 612.0 A2.5 1.0 0 0 1 754.0 612.0 Z" fill="url(#gPinkR)" stroke="#000" stroke-width="0.8" stroke-linejoin="round"/>
<path d="M776.5 612.0 L776.5 762.0 A3.8 1.0 0 0 0 784.0 762.0 L784.0 612.0 A3.8 1.0 0 0 1 776.5 612.0 Z" fill="url(#gPinkR)" stroke="#000" stroke-width="0.8" stroke-linejoin="round"/>
<path d="M1044.0 600.0 L1044.0 757.0 A13.0 1.6 0 0 0 1070.0 757.0 L1070.0 600.0 A13.0 1.6 0 0 1 1044.0 600.0 Z" fill="url(#gMag)" stroke="#000" stroke-width="0.8" stroke-linejoin="round"/>
<path d="M1019.0 600.0 L1019.0 640.0 A6.0 1.0 0 0 0 1031.0 640.0 L1031.0 600.0 A6.0 1.0 0 0 1 1019.0 600.0 Z" fill="url(#gMag)" stroke="#000" stroke-width="0.8" stroke-linejoin="round"/>
<path d="M681.0 560.0 L681.0 690.0 A17.0 2.0 0 0 0 715.0 690.0 L715.0 560.0 A17.0 2.0 0 0 1 681.0 560.0 Z" fill="url(#gMag)" stroke="#000" stroke-width="0.8" stroke-linejoin="round"/>
<path d="M688.0 610.0 L688.0 694.0 A4.0 1.0 0 0 0 696.0 694.0 L696.0 610.0 A4.0 1.0 0 0 1 688.0 610.0 Z" fill="url(#gGrn)" stroke="#000" stroke-width="0.8" stroke-linejoin="round"/>
<path d="M686.0 692.0 698.0 692.0 698.0 700.0 686.0 700.0Z" fill="url(#gGrn)" stroke="#000" stroke-width="0.6" stroke-linejoin="round"/>
<path d="M705.0 610.0 L705.0 694.0 A4.5 1.0 0 0 0 714.0 694.0 L714.0 610.0 A4.5 1.0 0 0 1 705.0 610.0 Z" fill="url(#gGrn)" stroke="#000" stroke-width="0.8" stroke-linejoin="round"/>
<path d="M703.0 692.0 716.0 692.0 716.0 700.0 703.0 700.0Z" fill="url(#gGrn)" stroke="#000" stroke-width="0.6" stroke-linejoin="round"/>
<path d="M812.0 610.0 L812.0 694.0 A4.0 1.0 0 0 0 820.0 694.0 L820.0 610.0 A4.0 1.0 0 0 1 812.0 610.0 Z" fill="url(#gGrn)" stroke="#000" stroke-width="0.8" stroke-linejoin="round"/>
<path d="M810.0 692.0 822.0 692.0 822.0 700.0 810.0 700.0Z" fill="url(#gGrn)" stroke="#000" stroke-width="0.6" stroke-linejoin="round"/>
<path d="M832.0 610.0 L832.0 694.0 A4.0 1.0 0 0 0 840.0 694.0 L840.0 610.0 A4.0 1.0 0 0 1 832.0 610.0 Z" fill="url(#gGrn)" stroke="#000" stroke-width="0.8" stroke-linejoin="round"/>
<path d="M830.0 692.0 842.0 692.0 842.0 700.0 830.0 700.0Z" fill="url(#gGrn)" stroke="#000" stroke-width="0.6" stroke-linejoin="round"/>
<path d="M713.0 677.0 L713.0 700.0 A9.5 2.0 0 0 0 732.0 700.0 L732.0 677.0 A9.5 2.0 0 0 1 713.0 677.0 Z" fill="url(#gMag)" stroke="#000" stroke-width="0.8" stroke-linejoin="round"/>
<ellipse cx="722.5" cy="677.0" rx="9.5" ry="2.0" fill="#ff40ff" stroke="#000" stroke-width="0.8"/>
<path d="M645.0 687.0 L645.0 765.0 A9.5 2.0 0 0 0 664.0 765.0 L664.0 687.0 A9.5 2.0 0 0 1 645.0 687.0 Z" fill="url(#gMag)" stroke="#000" stroke-width="0.8" stroke-linejoin="round"/>
<ellipse cx="654.5" cy="687.0" rx="9.5" ry="2.0" fill="#ff40ff" stroke="#000" stroke-width="0.8"/>
<path d="M645.0 704.0 664.0 704.0" fill="none" stroke="#600060" stroke-width="0.7"/>
<path d="M645.0 712.0 664.0 712.0" fill="none" stroke="#600060" stroke-width="0.7"/>
<path d="M645.0 730.0 664.0 730.0" fill="none" stroke="#600060" stroke-width="0.7"/>
<path d="M645.0 738.0 664.0 738.0" fill="none" stroke="#600060" stroke-width="0.7"/>
<path d="M951.0 696.0 L951.0 774.0 A13.2 2.5 0 0 0 977.5 774.0 L977.5 696.0 A13.2 2.5 0 0 1 951.0 696.0 Z" fill="url(#gMag)" stroke="#000" stroke-width="0.8" stroke-linejoin="round"/>
<ellipse cx="964.2" cy="696.0" rx="13.2" ry="2.5" fill="#ff40ff" stroke="#000" stroke-width="0.8"/>
<path d="M951.0 712.0 977.5 712.0" fill="none" stroke="#600060" stroke-width="0.7"/>
<path d="M951.0 718.0 977.5 718.0" fill="none" stroke="#600060" stroke-width="0.7"/>
<path d="M951.0 742.0 977.5 742.0" fill="none" stroke="#600060" stroke-width="0.7"/>
<path d="M951.0 748.0 977.5 748.0" fill="none" stroke="#600060" stroke-width="0.7"/>
<path d="M1005.0 717.0 L1005.0 775.0 A12.5 1.5 0 0 0 1030.0 775.0 L1030.0 717.0 A12.5 1.5 0 0 1 1005.0 717.0 Z" fill="url(#gMag)" stroke="#000" stroke-width="0.8" stroke-linejoin="round"/>
<path d="M1030.0 690.0 L1030.0 752.0 A7.0 1.0 0 0 0 1044.0 752.0 L1044.0 690.0 A7.0 1.0 0 0 1 1030.0 690.0 Z" fill="url(#gMag)" stroke="#000" stroke-width="0.8" stroke-linejoin="round"/>
<path d="M961.0 640.0 L961.0 705.0 A4.5 1.0 0 0 0 970.0 705.0 L970.0 640.0 A4.5 1.0 0 0 1 961.0 640.0 Z" fill="url(#gMag)" stroke="#000" stroke-width="0.8" stroke-linejoin="round"/>
<path d="M629.0 665.0 L629.0 831.0 A8.0 1.5 0 0 0 645.0 831.0 L645.0 665.0 A8.0 1.5 0 0 1 629.0 665.0 Z" fill="url(#gMag)" stroke="#000" stroke-width="0.8" stroke-linejoin="round"/>
<ellipse cx="637.0" cy="665.0" rx="8.0" ry="1.5" fill="#300030" stroke="#000" stroke-width="0.8"/>
<path d="M629.0 711.0 645.0 711.0" fill="none" stroke="#600060" stroke-width="0.7"/>
<path d="M738.0 667.5 L738.0 834.0 A8.0 1.5 0 0 0 754.0 834.0 L754.0 667.5 A8.0 1.5 0 0 1 738.0 667.5 Z" fill="url(#gMag)" stroke="#000" stroke-width="0.8" stroke-linejoin="round"/>
<ellipse cx="746.0" cy="667.5" rx="8.0" ry="1.5" fill="#300030" stroke="#000" stroke-width="0.8"/>
<path d="M738.0 712.0 754.0 712.0" fill="none" stroke="#600060" stroke-width="0.7"/>
<path d="M742.0 652.0 750.0 652.0 750.0 668.0 742.0 668.0Z" fill="url(#gMag)" stroke="#000" stroke-width="0.5" stroke-linejoin="round"/>
<path d="M741.0 647.0 751.0 647.0 751.0 653.0 741.0 653.0Z" fill="#e8d820" stroke="#000" stroke-width="0.5" stroke-linejoin="round"/>
<path d="M926.0 672.5 L926.0 840.0 A8.2 1.5 0 0 0 942.5 840.0 L942.5 672.5 A8.2 1.5 0 0 1 926.0 672.5 Z" fill="url(#gMag)" stroke="#000" stroke-width="0.8" stroke-linejoin="round"/>
<ellipse cx="934.2" cy="672.5" rx="8.2" ry="1.5" fill="#300030" stroke="#000" stroke-width="0.8"/>
<path d="M926.0 718.0 942.5 718.0" fill="none" stroke="#600060" stroke-width="0.7"/>
<path d="M571.0 807.0 L571.0 829.0 A6.0 1.5 0 0 0 583.0 829.0 L583.0 807.0 A6.0 1.5 0 0 1 571.0 807.0 Z" fill="url(#gMag)" stroke="#000" stroke-width="0.8" stroke-linejoin="round"/>
<ellipse cx="577.0" cy="807.0" rx="6.0" ry="1.5" fill="#300030" stroke="#000" stroke-width="0.8"/>
<path d="M986.0 818.0 L986.0 842.0 A5.0 1.5 0 0 0 996.0 842.0 L996.0 818.0 A5.0 1.5 0 0 1 986.0 818.0 Z" fill="url(#gMag)" stroke="#000" stroke-width="0.8" stroke-linejoin="round"/>
<ellipse cx="991.0" cy="818.0" rx="5.0" ry="1.5" fill="#300030" stroke="#000" stroke-width="0.8"/>
<ellipse cx="645.0" cy="829.0" rx="8.0" ry="2.0" fill="#e000e0" stroke="#000" stroke-width="0.4"/>
<ellipse cx="960.0" cy="836.0" rx="12.0" ry="2.0" fill="#e000e0" stroke="#000" stroke-width="0.4"/>
<path d="M664.0 801.0 L664.0 831.0 A8.0 2.0 0 0 0 680.0 831.0 L680.0 801.0 A8.0 2.0 0 0 1 664.0 801.0 Z" fill="url(#gGrey)" stroke="#000" stroke-width="0.8" stroke-linejoin="round"/>
<ellipse cx="672.0" cy="801.0" rx="8.0" ry="2.0" fill="#404840" stroke="#000" stroke-width="0.8"/>
<path d="M888.0 809.0 L888.0 839.0 A8.5 2.0 0 0 0 905.0 839.0 L905.0 809.0 A8.5 2.0 0 0 1 888.0 809.0 Z" fill="url(#gGrey)" stroke="#000" stroke-width="0.8" stroke-linejoin="round"/>
<ellipse cx="896.5" cy="809.0" rx="8.5" ry="2.0" fill="#404840" stroke="#000" stroke-width="0.8"/>
<path d="M631.0 425.0 L631.0 453.0 A8.2 1.5 0 0 0 647.5 453.0 L647.5 425.0 A8.2 1.5 0 0 1 631.0 425.0 Z" fill="url(#gMag)" stroke="#000" stroke-width="0.8" stroke-linejoin="round"/>
<path d="M674.0 425.0 L674.0 468.0 A18.0 2.2 0 0 0 710.0 468.0 L710.0 425.0 A18.0 2.2 0 0 1 674.0 425.0 Z" fill="url(#gMag)" stroke="#000" stroke-width="0.8" stroke-linejoin="round"/>
<path d="M685.0 425.0 L685.0 468.0 A4.0 1.0 0 0 0 693.0 468.0 L693.0 425.0 A4.0 1.0 0 0 1 685.0 425.0 Z" fill="url(#gGrn)" stroke="#000" stroke-width="0.8" stroke-linejoin="round"/>
<path d="M715.6 425.0 L715.6 464.0 A4.2 1.0 0 0 0 724.0 464.0 L724.0 425.0 A4.2 1.0 0 0 1 715.6 425.0 Z" fill="url(#gGrn)" stroke="#000" stroke-width="0.8" stroke-linejoin="round"/>
<path d="M771 432 L872 436 L872 458 C840 468 800 468 771 463Z" fill="#00b4b8" stroke="#000" stroke-width="0.8" stroke-linejoin="round"/>
<path d="M830 434 L872 436 L872 458 C860 463 845 465 830 466Z" fill="#008888" stroke="#000" stroke-width="0" stroke-linejoin="round"/>
<path d="M852 435 L872 436 L872 458 C866 461 858 463 852 464Z" fill="#005c5c" stroke="#000" stroke-width="0" stroke-linejoin="round"/>
<path d="M790 434 L805 434 L805 466 L790 465Z" fill="#00d0d0" stroke="#000" stroke-width="0" stroke-linejoin="round"/>
<path d="M758.0 428.0 L758.0 464.5 A6.5 1.5 0 0 0 771.0 464.5 L771.0 428.0 A6.5 1.5 0 0 1 758.0 428.0 Z" fill="url(#mg11)" stroke="#000" stroke-width="0.8" stroke-linejoin="round"/>
<path d="M780.0 428.0 L780.0 457.0 A8.0 1.5 0 0 0 796.0 457.0 L796.0 428.0 A8.0 1.5 0 0 1 780.0 428.0 Z" fill="url(#gMag)" stroke="#000" stroke-width="0.8" stroke-linejoin="round"/>
<path d="M812.5 428.0 L812.5 470.0 A3.8 1.0 0 0 0 820.0 470.0 L820.0 428.0 A3.8 1.0 0 0 1 812.5 428.0 Z" fill="url(#gGrn)" stroke="#000" stroke-width="0.8" stroke-linejoin="round"/>
<path d="M843.7 428.0 L843.7 468.0 A3.6 1.0 0 0 0 851.0 468.0 L851.0 428.0 A3.6 1.0 0 0 1 843.7 428.0 Z" fill="url(#gGrn)" stroke="#000" stroke-width="0.8" stroke-linejoin="round"/>
<path d="M928.0 432.0 L928.0 461.0 A8.0 1.5 0 0 0 944.0 461.0 L944.0 432.0 A8.0 1.5 0 0 1 928.0 432.0 Z" fill="url(#gMag)" stroke="#000" stroke-width="0.8" stroke-linejoin="round"/>
<path d="M1041.0 425.0 L1041.0 442.0 A8.0 1.5 0 0 0 1057.0 442.0 L1057.0 425.0 A8.0 1.5 0 0 1 1041.0 425.0 Z" fill="url(#gMag)" stroke="#000" stroke-width="0.8" stroke-linejoin="round"/>
<path d="M893.0 432.0 L893.0 438.0 A6.0 1.0 0 0 0 905.0 438.0 L905.0 432.0 A6.0 1.0 0 0 1 893.0 432.0 Z" fill="url(#gMag)" stroke="#000" stroke-width="0.8" stroke-linejoin="round"/>
<path d="M287 509.4 L275.5 509.4 Q272 509.4 272 514.7 Q272 520.0 275.5 520.0 L287 520.0 Z" fill="url(#gSteel)" stroke="#000" stroke-width="0.7" stroke-linejoin="round"/>
<path d="M287 556.0 L275.5 556.0 Q272 556.0 272 561.1 Q272 566.3 275.5 566.3 L287 566.3 Z" fill="url(#gSteel)" stroke="#000" stroke-width="0.7" stroke-linejoin="round"/>
<path d="M286.5 508.5 289.5 505.0 296.5 505.0 296.5 524.4 289.5 524.4 286.5 520.9Z" fill="#8c8caa" stroke="#000" stroke-width="0.7" stroke-linejoin="round"/>
<path d="M286.5 508.5 289.5 505.0 296.5 505.0 296.5 510.0 286.5 511.5Z" fill="#a4a4c0" stroke="#000" stroke-width="0.5" stroke-linejoin="round"/>
<path d="M286.5 556.0 289.5 552.5 296.5 552.5 296.5 571.0 289.5 571.0 286.5 567.5Z" fill="#8c8caa" stroke="#000" stroke-width="0.7" stroke-linejoin="round"/>
<path d="M286.5 556.0 289.5 552.5 296.5 552.5 296.5 557.5 286.5 559.0Z" fill="#a4a4c0" stroke="#000" stroke-width="0.5" stroke-linejoin="round"/>
<path d="M297.0 505.6 312.7 502.5 344.0 503.0 344.0 510.5 329.0 512.0 322.7 506.0Z" fill="#4c4c58" stroke="#000" stroke-width="0.7" stroke-linejoin="round"/>
<path d="M297.0 505.6 312.7 502.5 330.0 502.8 322.7 506.0Z" fill="#8c8ca6" stroke="#000" stroke-width="0.6" stroke-linejoin="round"/>
<path d="M322.7 506.0 329.0 510.0 329.0 567.0 344.0 566.0 344.0 571.0 325.0 574.0 322.7 572.5Z" fill="#3c3c46" stroke="#000" stroke-width="0.7" stroke-linejoin="round"/>
<path d="M341.0 509.0 459.0 510.5 459.0 515.0 341.0 514.5Z" fill="#b0b0c8" stroke="#000" stroke-width="0.4" stroke-linejoin="round"/>
<path d="M325.2 510.6 459.0 512.5 459.0 524.4 325.2 521.0Z" fill="url(#gSteel)" stroke="#000" stroke-width="0.6" stroke-linejoin="round"/>
<path d="M325.2 558.1 459.0 561.9 459.0 571.2 325.2 568.0Z" fill="url(#gSteel)" stroke="#000" stroke-width="0.6" stroke-linejoin="round"/>
<path d="M328 521.9 L459 525 L459 561.9 L328 558 Q324.5 540 328 521.9Z" fill="url(#gSteel)" stroke="#000" stroke-width="0.6" stroke-linejoin="round"/>
<path d="M298.5 505.6 L322.7 506 L322.7 572.5 L298.5 571.5 Q296 571.500 296 569 L296 508 Q296 505.600 298.5 505.6Z" fill="#9090ae" stroke="#000" stroke-width="0.7" stroke-linejoin="round"/>
<path d="M296.0 514.0 322.7 514.5" fill="none" stroke="#5c5c70" stroke-width="0.6"/>
<path d="M296.0 564.5 322.7 565.2" fill="none" stroke="#5c5c70" stroke-width="0.6"/>
<path d="M461.0 509.0 466.0 506.5 487.0 507.0 481.0 509.5Z" fill="#8484a0" stroke="#000" stroke-width="0.7" stroke-linejoin="round"/>
<path d="M461 508.7 L481 509.2 L481 577.5 L461 576.8 Q459 576.8 459 575 L459 510.5 Q459 508.7 461 508.7Z" fill="#9090ae" stroke="#000" stroke-width="0.7" stroke-linejoin="round"/>
<path d="M459.0 518.7 481.0 519.0" fill="none" stroke="#5c5c70" stroke-width="0.6"/>
<path d="M459.0 569.6 481.0 570.0" fill="none" stroke="#5c5c70" stroke-width="0.6"/>
<ellipse cx="477.2" cy="519.2" rx="4.3" ry="8.2" fill="#2c862c" stroke="#000" stroke-width="0.6"/>
<ellipse cx="477.2" cy="571.0" rx="4.3" ry="8.2" fill="#2c862c" stroke="#000" stroke-width="0.6"/>
<path d="M481.0 507.5 512.5 502.5 535.0 503.0 492.5 510.0Z" fill="#d88a08" stroke="#000" stroke-width="0.7" stroke-linejoin="round"/>
<path d="M481.0 507.5 492.5 510.0 492.5 586.0 481.0 582.0Z" fill="#f09410" stroke="#000" stroke-width="0.7" stroke-linejoin="round"/>
<path d="M492.5 510.0 535.0 503.0 602.0 504.0 602.0 510.0Z" fill="#f48484" stroke="#000" stroke-width="0.7" stroke-linejoin="round"/>
<path d="M492.5 586.0 560.0 586.0 560.0 593.0 500.0 592.5Z" fill="#b86060" stroke="#000" stroke-width="0.7" stroke-linejoin="round"/>
<path d="M494 510 L602 510 L602 586 L494 586 Q492.5 586 492.5 584 L492.5 512 Q492.5 510 494 510Z" fill="#f88482" stroke="#000" stroke-width="0.7" stroke-linejoin="round"/>
<path d="M612.0 572.0 636.0 572.0 636.0 586.0 612.0 586.0Z" fill="#e87a7a" stroke="#000" stroke-width="0.7" stroke-linejoin="round"/>
<path d="M636.0 572.0 641.0 571.0 641.0 585.0 636.0 586.0Z" fill="#b86060" stroke="#000" stroke-width="0.6" stroke-linejoin="round"/>
<path d="M600.0 527.5 670.0 527.5 670.0 540.0 600.0 540.0Z" fill="#007474" stroke="#000" stroke-width="0.6" stroke-linejoin="round"/>
<path d="M649 494 Q650 490 654 490 L671 490 L671 530 L641 530Z" fill="#008484" stroke="#000" stroke-width="0.7" stroke-linejoin="round"/>
<path d="M645.0 524.0 655.0 497.0" fill="none" stroke="#909090" stroke-width="2"/>
<path d="M600.0 515.0 621.0 515.0 621.0 527.5 600.0 527.5Z" fill="#f0e020" stroke="#000" stroke-width="0.6" stroke-linejoin="round"/>
<path d="M615.0 520.0 627.0 520.0 627.0 526.0 615.0 526.0Z" fill="#e8d818" stroke="#000" stroke-width="0.5" stroke-linejoin="round"/>
<path d="M636.0 522.0 644.0 517.0 655.0 518.0 659.0 527.0 655.0 536.0 642.0 538.0 636.0 533.0Z" fill="#6a14c8" stroke="#000" stroke-width="0.7" stroke-linejoin="round"/>
<ellipse cx="644.0" cy="527.5" rx="5.5" ry="5.5" fill="#8030e0" stroke="#000" stroke-width="0.5"/>
<ellipse cx="644.0" cy="527.5" rx="3.0" ry="3.0" fill="#30a030" stroke="#000" stroke-width="0.5"/>
<path d="M651.0 527.5 669.0 527.5 669.0 538.0 651.0 538.0Z" fill="#e8d820" stroke="#000" stroke-width="0.6" stroke-linejoin="round"/>
<path d="M656.0 530.0 663.0 536.0" fill="none" stroke="#000" stroke-width="0.7"/>
<path d="M656.0 536.0 663.0 530.0" fill="none" stroke="#000" stroke-width="0.7"/>
<path d="M606.0 538.0 721.0 538.0 721.0 548.0 606.0 548.0Z" fill="#b8f4c4" stroke="#000" stroke-width="0.6" stroke-linejoin="round"/>
<path d="M643.0 540.0 704.0 540.0 700.0 548.0 647.0 548.0Z" fill="#ccfad4" stroke="#000" stroke-width="0.5" stroke-linejoin="round"/>
<path d="M611.0 548.0 669.0 548.0 669.0 559.0 611.0 559.0Z" fill="#b8f4c4" stroke="#000" stroke-width="0.6" stroke-linejoin="round"/>
<path d="M611.0 559.0 669.0 559.0 669.0 567.0 611.0 567.0Z" fill="#008a8a" stroke="#000" stroke-width="0.6" stroke-linejoin="round"/>
<path d="M611.0 567.0 669.0 567.0 669.0 575.0 611.0 575.0Z" fill="#b8f4c4" stroke="#000" stroke-width="0.6" stroke-linejoin="round"/>
<path d="M616.0 575.0 669.0 575.0 669.0 581.0 616.0 581.0Z" fill="#f08080" stroke="#000" stroke-width="0.5" stroke-linejoin="round"/>
<path d="M716.0 630.5 775.0 621.5 775.0 630.5 716.0 640.0Z" fill="url(#mg12)" stroke="#000" stroke-width="0.6" stroke-linejoin="round"/>
<path d="M760.0 632.5 822.0 623.0 822.0 632.0 760.0 642.0Z" fill="url(#mg12)" stroke="#000" stroke-width="0.6" stroke-linejoin="round"/>
<path d="M701.5 625.0 L710.5 625.5 A6 13 0 0 1 710.5 650.5 L701.5 651.0 Z" fill="#4a00a8" stroke="#000" stroke-width="0.6" stroke-linejoin="round"/>
<ellipse cx="701.5" cy="638.0" rx="12.5" ry="13.0" fill="#8608fc" stroke="#000" stroke-width="0.7"/>
<path d="M745.0 627.0 L754.0 627.5 A6 13 0 0 1 754.0 652.5 L745.0 653.0 Z" fill="#4a00a8" stroke="#000" stroke-width="0.6" stroke-linejoin="round"/>
<ellipse cx="745.0" cy="640.0" rx="12.5" ry="13.0" fill="#8608fc" stroke="#000" stroke-width="0.7"/>
<text x="838" y="459" font-size="13" fill="#c8c8c8">Z</text>
<path d="M843.0 466.0 846.0 459.0 849.0 466.0Z" fill="#00c8d0" stroke="#000" stroke-width="0" stroke-linejoin="round"/>
<path d="M670.8 469.0 694.8 464.0 864.6 467.0 824.0 473.3Z" fill="#82829e" stroke="#000" stroke-width="0.7" stroke-linejoin="round"/>
<ellipse cx="712.0" cy="467.5" rx="5.0" ry="1.0" fill="#101018" stroke="#000" stroke-width="0"/>
<ellipse cx="770.0" cy="469.0" rx="5.0" ry="1.0" fill="#101018" stroke="#000" stroke-width="0"/>
<ellipse cx="810.0" cy="470.0" rx="5.0" ry="1.0" fill="#101018" stroke="#000" stroke-width="0"/>
<ellipse cx="840.0" cy="468.0" rx="5.0" ry="1.0" fill="#101018" stroke="#000" stroke-width="0"/>
<path d="M824.0 473.3 864.6 467.0 864.6 531.0 824.0 536.0Z" fill="#404050" stroke="#000" stroke-width="0.7" stroke-linejoin="round"/>
<path d="M670.8 469.0 824.0 473.3 824.0 536.0 670.8 536.0Z" fill="#b4b4d8" stroke="#000" stroke-width="0.7" stroke-linejoin="round"/>
<ellipse cx="702.7" cy="489.4" rx="5.6" ry="6.2" fill="#8c8ca8" stroke="#000" stroke-width="0.8"/>
<ellipse cx="704.0" cy="489.6" rx="3.6" ry="4.6" fill="#505060" stroke="#000" stroke-width="0.5"/>
<ellipse cx="787.5" cy="491.0" rx="5.6" ry="6.2" fill="#8c8ca8" stroke="#000" stroke-width="0.8"/>
<ellipse cx="788.6" cy="491.0" rx="3.6" ry="4.6" fill="#505060" stroke="#000" stroke-width="0.5"/>
<path d="M837.5 502.5 856.0 502.5 856.0 535.0 837.5 535.0Z" fill="#f88888" stroke="#000" stroke-width="0.7" stroke-linejoin="round"/>
<path d="M837.5 502.5 843.0 500.5 925.0 501.0 920.0 504.0Z" fill="#c02020" stroke="#000" stroke-width="0.5" stroke-linejoin="round"/>
<path d="M856 504 L930 504 Q934 505 936 509 L946 531 L946 545 L856 545Z" fill="#8a00ff" stroke="#000" stroke-width="0.7" stroke-linejoin="round"/>
<path d="M908 504 L930 504 Q934 505 936 509 L946 531 L932 534 Q924 512 908 504Z" fill="#5a10b0" stroke="#000" stroke-width="0.6" stroke-linejoin="round"/>
<path d="M918.0 514.0 926.0 512.0 936.0 532.0 928.0 534.0Z" fill="#9898a8" stroke="#000" stroke-width="0.5" stroke-linejoin="round"/>
<path d="M831.0 548.0 970.0 550.0 970.0 556.0 831.0 556.0Z" fill="#b8f4c4" stroke="#000" stroke-width="0.6" stroke-linejoin="round"/>
<path d="M876.0 547.5 965.0 547.5 965.0 555.0 876.0 555.0Z" fill="#c4f8cc" stroke="#000" stroke-width="0.5" stroke-linejoin="round"/>
<path d="M831.0 556.0 905.0 556.0 905.0 567.5 831.0 567.5Z" fill="#b8f4c4" stroke="#000" stroke-width="0.6" stroke-linejoin="round"/>
<path d="M905.0 555.0 955.0 555.0 950.0 562.5 910.0 562.5Z" fill="#008a8a" stroke="#000" stroke-width="0.6" stroke-linejoin="round"/>
<path d="M854.0 560.0 960.0 560.0 960.0 577.5 854.0 577.5Z" fill="#8a00ff" stroke="#000" stroke-width="0.6" stroke-linejoin="round"/>
<path d="M960.0 560.0 967.5 558.0 967.5 575.0 960.0 577.5Z" fill="#5000a0" stroke="#000" stroke-width="0.6" stroke-linejoin="round"/>
<path d="M836.0 566.0 854.0 566.0 854.0 575.0 836.0 575.0Z" fill="#f88888" stroke="#000" stroke-width="0.6" stroke-linejoin="round"/>
<path d="M850.0 576.0 970.0 577.5 970.0 584.0 850.0 583.0Z" fill="#b8f4c4" stroke="#000" stroke-width="0.6" stroke-linejoin="round"/>
<path d="M912.0 562.0 915.5 562.0 915.5 569.5 912.0 569.5Z" fill="url(#gGrn)" stroke="#000" stroke-width="0.4" stroke-linejoin="round"/>
<path d="M918.0 562.0 921.5 562.0 921.5 569.5 918.0 569.5Z" fill="url(#gGrn)" stroke="#000" stroke-width="0.4" stroke-linejoin="round"/>
<path d="M924.0 562.0 927.5 562.0 927.5 569.5 924.0 569.5Z" fill="url(#gGrn)" stroke="#000" stroke-width="0.4" stroke-linejoin="round"/>
<path d="M965.0 541.0 976.0 541.0 976.0 547.5 965.0 547.5Z" fill="#e01010" stroke="#000" stroke-width="0.4" stroke-linejoin="round"/>
<path d="M925.0 544.5 947.0 544.5 947.0 547.0 925.0 547.0Z" fill="#e8d820" stroke="#000" stroke-width="0.3" stroke-linejoin="round"/>
<path d="M823.0 557.0 863.0 555.0 863.0 587.0 854.6 588.0 854.6 607.0 823.0 611.0Z" fill="#143814" stroke="#000" stroke-width="0.7" stroke-linejoin="round"/>
<path d="M669.0 546.0 823.0 556.0 823.0 611.0 669.0 608.0Z" fill="#388c38" stroke="#000" stroke-width="0.7" stroke-linejoin="round"/>
<ellipse cx="702.0" cy="584.6" rx="6.5" ry="6.8" fill="#8a10f8" stroke="#000" stroke-width="0.7"/>
<ellipse cx="785.2" cy="586.7" rx="6.5" ry="6.8" fill="#8a10f8" stroke="#000" stroke-width="0.7"/>
<path d="M702.0 542.0 721.0 542.0 721.0 559.0 702.0 559.0Z" fill="#b8f4c4" stroke="#000" stroke-width="0.7" stroke-linejoin="round"/>
<path d="M702.0 542.0 707.0 542.0 707.0 559.0 702.0 559.0Z" fill="#d0fcd8" stroke="#000" stroke-width="0.4" stroke-linejoin="round"/>
<path d="M737.5 477.5 743.0 477.5 743.0 489.0 737.5 489.0Z" fill="url(#gGrn)" stroke="#000" stroke-width="0.5" stroke-linejoin="round"/>
<path d="M763.0 477.5 768.8 477.5 768.8 488.0 763.0 488.0Z" fill="url(#gGrn)" stroke="#000" stroke-width="0.5" stroke-linejoin="round"/>
<path d="M722.0 562.0 784.0 565.0 784.0 570.0 722.0 567.0Z" fill="#006a6a" stroke="#000" stroke-width="0.6" stroke-linejoin="round"/>
<path d="M725.0 488.0 750.0 486.0 782.0 487.0 759.0 489.5Z" fill="#00908f" stroke="#000" stroke-width="0.6" stroke-linejoin="round"/>
<path d="M759.0 489.5 782.0 487.0 782.0 565.0 759.0 563.0Z" fill="#007878" stroke="#000" stroke-width="0.7" stroke-linejoin="round"/>
<path d="M767.7 516.0 782.0 514.0 782.0 540.0 767.7 541.0Z" fill="#003c3c" stroke="#000" stroke-width="0.6" stroke-linejoin="round"/>
<path d="M750.0 489.0 759.0 489.5 759.0 563.0 750.0 562.5Z" fill="#00a4a8" stroke="#000" stroke-width="0.5" stroke-linejoin="round"/>
<path d="M725.0 488.0 750.0 489.0 750.0 562.5 725.0 562.0Z" fill="#00bcc0" stroke="#000" stroke-width="0.7" stroke-linejoin="round"/>
<path d="M736.5 566.0 745.0 566.0 745.0 576.0 736.5 576.0Z" fill="url(#gGrn)" stroke="#000" stroke-width="0.5" stroke-linejoin="round"/>
<path d="M757.0 544.0 781.0 544.0 781.0 560.0 757.0 560.0Z" fill="#b8f4c4" stroke="#000" stroke-width="0.7" stroke-linejoin="round"/>
<path d="M773.0 544.0 781.0 544.0 781.0 560.0 773.0 560.0Z" fill="#90c89c" stroke="#000" stroke-width="0.4" stroke-linejoin="round"/>
<path d="M798.0 540.0 875.0 531.0 882.0 534.0 882.0 545.0 830.0 557.5 798.0 558.0Z" fill="#74744e" stroke="#000" stroke-width="0.7" stroke-linejoin="round"/>
<path d="M798.0 540.0 875.0 531.0 882.0 534.0 806.0 545.0Z" fill="#90906a" stroke="#000" stroke-width="0.5" stroke-linejoin="round"/>
<path d="M790.5 539.2 798.5 540.2 802.5 548.8 798.5 557.2 790.5 558.2Z" fill="#2c2c34" stroke="#000" stroke-width="0.6" stroke-linejoin="round"/>
<ellipse cx="788.5" cy="548.8" rx="10.0" ry="10.3" fill="#34343c" stroke="#000" stroke-width="0.6"/>
<ellipse cx="788.0" cy="548.8" rx="7.8" ry="8.4" fill="none" stroke="#ffffff" stroke-width="2.5"/>
<ellipse cx="789.0" cy="548.8" rx="4.2" ry="5.2" fill="#50505c" stroke="#000" stroke-width="0.4"/>
<path d="M789.5 538.8 789.5 543.8" fill="none" stroke="#2c2c34" stroke-width="2"/>
<path d="M819.7 539.9 827.7 540.9 831.7 549.4 827.7 557.9 819.7 558.9Z" fill="#2c2c34" stroke="#000" stroke-width="0.6" stroke-linejoin="round"/>
<ellipse cx="817.7" cy="549.4" rx="10.0" ry="10.3" fill="#34343c" stroke="#000" stroke-width="0.6"/>
<ellipse cx="817.2" cy="549.4" rx="7.8" ry="8.4" fill="none" stroke="#ffffff" stroke-width="2.5"/>
<ellipse cx="818.2" cy="549.4" rx="4.2" ry="5.2" fill="#50505c" stroke="#000" stroke-width="0.4"/>
<path d="M818.7 539.4 818.7 544.4" fill="none" stroke="#2c2c34" stroke-width="2"/>
<path d="M560 612.5 L492 612.5 Q469 613.5 469 625 Q469 637 492 637.5 L560 637.5Z" fill="url(#mg13)" stroke="#000" stroke-width="0.7" stroke-linejoin="round"/>
<path d="M560 621.5 L510 621.5 Q500 622 510 623 L560 623.5Z" fill="#a000a0" stroke="#000" stroke-width="0" stroke-linejoin="round"/>
<path d="M606.0 600.0 634.0 600.5 634.0 622.0 606.0 622.0Z" fill="url(#mg13)" stroke="#000" stroke-width="0.6" stroke-linejoin="round"/>
<ellipse cx="641.0" cy="612.5" rx="8.5" ry="18.0" fill="#e000e0" stroke="#000" stroke-width="0.8"/>
<ellipse cx="643.5" cy="612.5" rx="6.0" ry="14.5" fill="#ff20ff" stroke="#000" stroke-width="0.6"/>
<ellipse cx="646.0" cy="612.5" rx="3.2" ry="9.0" fill="#c800c8" stroke="#000" stroke-width="0.6"/>
<path d="M646.0 603.5 656.0 603.5 656.0 621.5 646.0 621.5Z" fill="url(#gMagH)" stroke="#000" stroke-width="0" stroke-linejoin="round"/>
<path d="M604.0 540.0 L604.0 700.0 A4.0 1.0 0 0 0 612.0 700.0 L612.0 540.0 A4.0 1.0 0 0 1 604.0 540.0 Z" fill="url(#gMag)" stroke="#000" stroke-width="0.8" stroke-linejoin="round"/>
<path d="M585.0 700.0 L585.0 764.0 A12.5 1.5 0 0 0 610.0 764.0 L610.0 700.0 A12.5 1.5 0 0 1 585.0 700.0 Z" fill="url(#gMag)" stroke="#000" stroke-width="0.8" stroke-linejoin="round"/>
<path d="M563.5 430.0 L563.5 542.0 A18.1 2.2 0 0 0 599.6 542.0 L599.6 430.0 A18.1 2.2 0 0 1 563.5 430.0 Z" fill="url(#gMag)" stroke="#000" stroke-width="0.8" stroke-linejoin="round"/>
<path d="M561.5 427.5 602.0 427.5 602.0 432.0 561.5 432.0Z" fill="url(#gMag)" stroke="#000" stroke-width="0.6" stroke-linejoin="round"/>
<path d="M555.5 540.0 L555.5 696.0 A25.2 2.0 0 0 0 606.0 696.0 L606.0 540.0 A25.2 2.0 0 0 1 555.5 540.0 Z" fill="url(#gMag)" stroke="#000" stroke-width="0.8" stroke-linejoin="round"/>
<ellipse cx="580.8" cy="540.0" rx="25.2" ry="2.0" fill="#ff30ff" stroke="#000" stroke-width="0.8"/>
<path d="M551.0 694.0 L551.0 704.0 A28.5 2.5 0 0 0 608.0 704.0 L608.0 694.0 A28.5 2.5 0 0 1 551.0 694.0 Z" fill="url(#gMag)" stroke="#000" stroke-width="0.8" stroke-linejoin="round"/>
<ellipse cx="556.0" cy="625.0" rx="3.0" ry="17.0" fill="none" stroke="#500050" stroke-width="0.8"/>
<path d="M654.0 577.0 L654.0 690.0 A13.5 1.6 0 0 0 681.0 690.0 L681.0 577.0 A13.5 1.6 0 0 1 654.0 577.0 Z" fill="url(#gMag)" stroke="#000" stroke-width="0.8" stroke-linejoin="round"/>
<path d="M1141.0 425.0 L1399.0 432.5 A10.0 27.2 0 0 1 1399.0 487.0 L1141.0 479.0 A5.5 27.0 0 0 1 1141.0 425.0 Z" fill="url(#gSal)" stroke="#000" stroke-width="0.8" stroke-linejoin="round"/>
<ellipse cx="1399.0" cy="459.8" rx="10.0" ry="27.2" fill="url(#gSal)" stroke="#000" stroke-width="0.8"/>
<ellipse cx="1400.2" cy="459.8" rx="7.8" ry="24.8" fill="#643030" stroke="#000" stroke-width="0.6"/>
<path d="M1141.5 427.0 Q1131.0 428.5 1130.0 435.5 L1130.0 469.0 Q1131.0 476.0 1141.5 477.5 A6 25.2 0 0 1 1141.5 427.0 Z" fill="url(#gSal)" stroke="#000" stroke-width="0.7" stroke-linejoin="round"/>
<path d="M1178.0 646.0 L1435.0 653.8 A10.0 27.0 0 0 1 1435.0 707.8 L1178.0 700.0 A5.5 27.0 0 0 1 1178.0 646.0 Z" fill="url(#gSal)" stroke="#000" stroke-width="0.8" stroke-linejoin="round"/>
<ellipse cx="1435.0" cy="680.8" rx="10.0" ry="27.0" fill="url(#gSal)" stroke="#000" stroke-width="0.8"/>
<ellipse cx="1436.2" cy="680.8" rx="7.8" ry="24.5" fill="#643030" stroke="#000" stroke-width="0.6"/>
<path d="M1147.0 735.0 L1397.0 742.0 A10.0 27.0 0 0 1 1397.0 796.0 L1147.0 789.0 A5.5 27.0 0 0 1 1147.0 735.0 Z" fill="url(#gSal)" stroke="#000" stroke-width="0.8" stroke-linejoin="round"/>
<ellipse cx="1397.0" cy="769.0" rx="10.0" ry="27.0" fill="url(#gSal)" stroke="#000" stroke-width="0.8"/>
<ellipse cx="1398.2" cy="769.0" rx="7.8" ry="24.5" fill="#643030" stroke="#000" stroke-width="0.6"/>
<path d="M1147.5 737.0 Q1136.0 738.5 1135.0 745.5 L1135.0 779.0 Q1136.0 786.0 1147.5 787.5 A6 25.2 0 0 1 1147.5 737.0 Z" fill="url(#gSal)" stroke="#000" stroke-width="0.7" stroke-linejoin="round"/>
<path d="M1079 657 A45 46.5 0 1 1 1169 657 A45 46.5 0 1 1 1079 657Z M1099 657 A25 26 0 1 0 1149 657 A25 26 0 1 0 1099 657Z" fill="url(#gTor)" fill-rule="evenodd" stroke="#000" stroke-width="0.6"/>
<path d="M1019.5 547.5 L1019.5 700.0 A6.8 1.0 0 0 0 1033.0 700.0 L1033.0 547.5 A6.8 1.0 0 0 1 1019.5 547.5 Z" fill="url(#gMag)" stroke="#000" stroke-width="0.8" stroke-linejoin="round"/>
<path d="M1045.0 543.0 L1045.0 640.0 A7.5 1.0 0 0 0 1060.0 640.0 L1060.0 543.0 A7.5 1.0 0 0 1 1045.0 543.0 Z" fill="url(#gMag)" stroke="#000" stroke-width="0.8" stroke-linejoin="round"/>
<path d="M970.0 436.0 L970.0 552.0 A5.0 1.0 0 0 0 980.0 552.0 L980.0 436.0 A5.0 1.0 0 0 1 970.0 436.0 Z" fill="#e408e4" stroke="#000" stroke-width="0.8" stroke-linejoin="round"/>
<path d="M978.0 436.0 L978.0 552.0 A18.0 2.2 0 0 0 1014.0 552.0 L1014.0 436.0 A18.0 2.2 0 0 1 978.0 436.0 Z" fill="url(#gMag)" stroke="#000" stroke-width="0.8" stroke-linejoin="round"/>
<path d="M970.5 549.0 L970.5 708.0 A24.5 2.0 0 0 0 1019.5 708.0 L1019.5 549.0 A24.5 2.0 0 0 1 970.5 549.0 Z" fill="url(#gMag)" stroke="#000" stroke-width="0.8" stroke-linejoin="round"/>
<path d="M966.0 706.0 L966.0 716.0 A28.2 2.5 0 0 0 1022.5 716.0 L1022.5 706.0 A28.2 2.5 0 0 1 966.0 706.0 Z" fill="url(#gMag)" stroke="#000" stroke-width="0.8" stroke-linejoin="round"/>
<path d="M1002.3 524.0 1007.7 521.5 1007.7 606.0 1002.3 610.0Z" fill="#8c8c5c" stroke="#000" stroke-width="0.5" stroke-linejoin="round"/>
<path d="M979 526 Q979 520.5 985 520 L998 521 Q1002.3 521.5 1002.3 526 L1002.3 606 Q1002.3 612 997 612 L985 612 Q979 612 979 606Z" fill="#f8f4b4" stroke="#000" stroke-width="0.8" stroke-linejoin="round"/>
<ellipse cx="991.6" cy="534.1" rx="4.2" ry="5.2" fill="#585850" stroke="#000" stroke-width="0.9"/>
<path d="M992 529.5 A3.4 4.6 0 0 1 992 538.7 Z" fill="#e000e0" stroke="#000" stroke-width="0" stroke-linejoin="round"/>
<ellipse cx="991.0" cy="588.3" rx="4.7" ry="6.4" fill="#74746a" stroke="#000" stroke-width="0.9"/>
<path d="M991.5 582.5 A4 5.8 0 0 1 991.5 594.1 Z" fill="#e000e0" stroke="#000" stroke-width="0" stroke-linejoin="round"/>
<path d="M524.6 391.7 677.0 366.7 1165.0 381.0 1011.0 406.0Z" fill="#7e7e98" stroke="#000" stroke-width="0.8" stroke-linejoin="round"/>
<ellipse cx="639.0" cy="390.0" rx="13.0" ry="1.7" fill="#101018" stroke="#000" stroke-width="0"/>
<ellipse cx="787.5" cy="394.6" rx="14.0" ry="1.7" fill="#101018" stroke="#000" stroke-width="0"/>
<ellipse cx="897.0" cy="377.0" rx="13.0" ry="1.7" fill="#101018" stroke="#000" stroke-width="0"/>
<ellipse cx="936.0" cy="398.7" rx="13.0" ry="1.7" fill="#101018" stroke="#000" stroke-width="0"/>
<ellipse cx="1050.0" cy="380.5" rx="12.0" ry="1.7" fill="#101018" stroke="#000" stroke-width="0"/>
<ellipse cx="1137.0" cy="383.0" rx="9.0" ry="1.7" fill="#101018" stroke="#000" stroke-width="0"/>
<ellipse cx="700.0" cy="372.0" rx="8.0" ry="1.7" fill="#101018" stroke="#000" stroke-width="0"/>
<path d="M1011.0 406.0 1165.0 381.0 1165.0 415.0 1011.0 440.0Z" fill="#404050" stroke="#000" stroke-width="0.8" stroke-linejoin="round"/>
<ellipse cx="1089.0" cy="410.7" rx="2.6" ry="6.4" fill="#c4d4cc" stroke="#000" stroke-width="0.6"/>
<path d="M524.6 391.7 1011.0 406.0 1011.0 440.0 524.6 426.0Z" fill="#b4b4d8" stroke="#000" stroke-width="0.8" stroke-linejoin="round"/>
<path d="M681.6 375.5 L681.6 380 A83 8 0 0 0 847.6 380 L847.6 375.5Z" fill="url(#mg14)" stroke="#000" stroke-width="0.7" stroke-linejoin="round"/>
<ellipse cx="764.6" cy="375.5" rx="83.0" ry="8.0" fill="url(#mg14)" stroke="#000" stroke-width="0.7"/>
<ellipse cx="765.0" cy="373.2" rx="62.0" ry="4.4" fill="#6c6c84" stroke="#000" stroke-width="0.7"/>
<path d="M703 373.2 A62 4.4 0 0 1 827 373.2 A62 3 0 0 0 703 373.2Z" fill="#e8e8b0" stroke="#000" stroke-width="0.4" stroke-linejoin="round"/>
<path d="M712.4 442.5 720.4 443.5 724.4 452.0 720.4 460.5 712.4 461.5Z" fill="#2c2c34" stroke="#000" stroke-width="0.6" stroke-linejoin="round"/>
<ellipse cx="710.4" cy="452.0" rx="10.0" ry="10.3" fill="#34343c" stroke="#000" stroke-width="0.6"/>
<ellipse cx="709.9" cy="452.0" rx="7.8" ry="8.4" fill="none" stroke="#ffffff" stroke-width="2.5"/>
<ellipse cx="710.9" cy="452.0" rx="4.2" ry="5.2" fill="#50505c" stroke="#000" stroke-width="0.4"/>
<path d="M711.4 442.0 711.4 447.0" fill="none" stroke="#2c2c34" stroke-width="2"/>
<path d="M752.0 443.0 760.0 444.0 764.0 452.5 760.0 461.0 752.0 462.0Z" fill="#2c2c34" stroke="#000" stroke-width="0.6" stroke-linejoin="round"/>
<ellipse cx="750.0" cy="452.5" rx="10.0" ry="10.3" fill="#34343c" stroke="#000" stroke-width="0.6"/>
<ellipse cx="749.5" cy="452.5" rx="7.8" ry="8.4" fill="none" stroke="#ffffff" stroke-width="2.5"/>
<ellipse cx="750.5" cy="452.5" rx="4.2" ry="5.2" fill="#50505c" stroke="#000" stroke-width="0.4"/>
<path d="M751.0 442.5 751.0 447.5" fill="none" stroke="#2c2c34" stroke-width="2"/>
<g opacity="0.9" fill="none" stroke="#f08a20" stroke-width="1.2">
<path d="M892 516V537.5Q903 537 913.5 540.5 M896 512.5V534.5Q905 534.5 913.5 538 M900 509.5V531.5Q907 532 913.5 535.5"/>
<path d="M935 516V537.5Q924 537 913.5 540.5 M931 512.5V534.5Q922 534.5 913.5 538 M927 509.5V531.5Q920 532 913.5 535.5"/>
<path d="M906.5 517.5A9 9 0 1 0 921 518.5" stroke="#f4a020" stroke-width="3.4"/>
<path d="M913.5 515V526" stroke="#f4a020" stroke-width="2.6"/>
</g>
<g fill="#f08a20" opacity="0.85"><text x="947.5" y="528.5" font-size="16.4" font-weight="bold">智造资料网</text></g>
<text x="947.5" y="537.8" font-size="4.6" font-weight="bold" fill="#f08a20" opacity=".8" textLength="81" lengthAdjust="spacingAndGlyphs">INTELLIGENT MANUFACTURING DATA</text>
<path d="M1033.0 552.8 1060.0 553.2 1060.0 572.2 1033.0 572.2Z" fill="url(#gSteel)" stroke="#000" stroke-width="0.6" stroke-linejoin="round"/>
<path d="M1059 555.0 L1051 555.0 Q1047.5 555.0 1047.5 560.3 Q1047.5 565.6 1051 565.6 L1059 565.6 Z" fill="url(#gGrnH)" stroke="#000" stroke-width="0.6" stroke-linejoin="round"/>
<path d="M1059 586.7 L1051 586.7 Q1047.5 586.7 1047.5 592.0 Q1047.5 597.3 1051 597.3 L1059 597.3 Z" fill="url(#gGrnH)" stroke="#000" stroke-width="0.6" stroke-linejoin="round"/>
<path d="M1062.0 527.0 1092.0 522.5 1111.0 523.0 1111.0 531.5 1079.0 533.0 1079.0 603.7 1071.0 606.0 1071.0 525.5Z" fill="#3c3c46" stroke="#000" stroke-width="0.7" stroke-linejoin="round"/>
<path d="M1108.8 532.0 1129.0 529.5 1129.0 596.5 1108.8 599.7Z" fill="#3c3c46" stroke="#000" stroke-width="0.6" stroke-linejoin="round"/>
<path d="M1127.0 535.0 1247.7 537.5 1247.7 542.5 1127.0 540.0Z" fill="#b0b0c8" stroke="#000" stroke-width="0.4" stroke-linejoin="round"/>
<path d="M1110.4 539.9 1247.7 542.3 1247.7 551.2 1110.4 546.3Z" fill="url(#gSteel)" stroke="#000" stroke-width="0.6" stroke-linejoin="round"/>
<path d="M1110.4 584.3 1247.7 588.4 1247.7 596.4 1110.4 593.2Z" fill="url(#gSteel)" stroke="#000" stroke-width="0.6" stroke-linejoin="round"/>
<path d="M1117 548 L1247.7 551.2 L1247.7 585.9 L1117 583.5 Q1113 566 1117 548Z" fill="url(#gSteel)" stroke="#000" stroke-width="0.6" stroke-linejoin="round"/>
<path d="M1079.0 533.0 1092.0 529.5 1129.0 529.5 1108.8 532.6Z" fill="#8484a0" stroke="#000" stroke-width="0.6" stroke-linejoin="round"/>
<path d="M1079.0 532.6 1108.8 532.6 1108.8 599.7 1079.0 600.5Z" fill="#9090ae" stroke="#000" stroke-width="0.7" stroke-linejoin="round"/>
<path d="M1079.0 540.7 1108.8 540.7" fill="none" stroke="#5c5c70" stroke-width="0.6"/>
<path d="M1079.0 591.6 1108.8 591.6" fill="none" stroke="#5c5c70" stroke-width="0.6"/>
<path d="M1062 527.8 L1071 525.5 L1071 606 L1062 603.5 Q1059.5 603 1059.5 600 L1059.5 531 Q1059.5 528.4 1062 527.8Z" fill="#9c9cba" stroke="#000" stroke-width="0.7" stroke-linejoin="round"/>
<ellipse cx="1074.5" cy="540.3" rx="1.7" ry="5.6" fill="#d8d8e8" stroke="#000" stroke-width="0.6"/>
<ellipse cx="1078.5" cy="561.3" rx="6.9" ry="8.5" fill="#2a8a2a" stroke="#000" stroke-width="0.7"/>
<ellipse cx="1080.5" cy="561.3" rx="4.0" ry="5.6" fill="#38a838" stroke="#000" stroke-width="0.6"/>
<ellipse cx="1081.3" cy="561.3" rx="1.8" ry="3.0" fill="#103810" stroke="#000" stroke-width="0"/>
<ellipse cx="1078.5" cy="592.0" rx="6.9" ry="8.5" fill="#2a8a2a" stroke="#000" stroke-width="0.7"/>
<ellipse cx="1080.5" cy="592.0" rx="4.0" ry="5.6" fill="#38a838" stroke="#000" stroke-width="0.6"/>
<ellipse cx="1081.3" cy="592.0" rx="1.8" ry="3.0" fill="#103810" stroke="#000" stroke-width="0"/>
<path d="M1249.0 536.7 1262.0 534.2 1298.0 535.2 1277.0 538.5Z" fill="#8484a0" stroke="#000" stroke-width="0.7" stroke-linejoin="round"/>
<path d="M1276.0 538.5 1297.0 540.0 1297.0 601.3 1276.0 604.5Z" fill="#3c3c46" stroke="#000" stroke-width="0.7" stroke-linejoin="round"/>
<path d="M1249.5 536.7 L1276 538.5 L1276 604.5 L1249.5 603.6 Q1247.7 603.600 1247.7 602 L1247.7 538.5 Q1247.7 536.700 1249.5 536.7Z" fill="#9090ae" stroke="#000" stroke-width="0.7" stroke-linejoin="round"/>
<path d="M1247.7 545.5 1276.0 546.5" fill="none" stroke="#5c5c70" stroke-width="0.6"/>
<path d="M1247.7 596.4 1276.0 597.0" fill="none" stroke="#5c5c70" stroke-width="0.6"/>
<path d="M1304.3 540.7 L1318 540.7 Q1321 540.7 1321 546.3 Q1321 552.0 1318 552.0 L1304.3 552.0 Z" fill="url(#gSteel)" stroke="#000" stroke-width="0.6" stroke-linejoin="round"/>
<ellipse cx="1319.0" cy="546.3" rx="1.5" ry="4.3" fill="#505068" stroke="#000" stroke-width="0.5"/>
<path d="M1292.0 539.5 1295.5 535.8 1303.0 535.8 1306.0 539.5 1306.0 550.0 1303.0 554.4 1292.0 554.4Z" fill="#2f8a2f" stroke="#000" stroke-width="0.6" stroke-linejoin="round"/>
<path d="M1286.5 543.0 L1302 543.0 Q1305.300 543.0 1305.300 548.7 Q1305.300 554.4 1302 554.4 L1286.5 554.4 Z" fill="url(#gSteel)" stroke="#000" stroke-width="0.6" stroke-linejoin="round"/>
<ellipse cx="1303.2" cy="548.7" rx="1.5" ry="4.4" fill="#505068" stroke="#000" stroke-width="0.5"/>
<path d="M1276.8 543.5 1280.0 539.0 1286.0 539.0 1289.0 543.5 1289.0 552.5 1286.0 556.8 1280.0 556.8 1276.8 552.5Z" fill="#2f8a2f" stroke="#000" stroke-width="0.6" stroke-linejoin="round"/>
<path d="M1280.0 539.0 1280.0 556.8" fill="none" stroke="#185018" stroke-width="0.6"/>
<path d="M1286.0 539.0 1286.0 556.8" fill="none" stroke="#185018" stroke-width="0.6"/>
<path d="M1304.3 587.7 L1318 587.7 Q1321 587.7 1321 593.3 Q1321 599.0 1318 599.0 L1304.3 599.0 Z" fill="url(#gSteel)" stroke="#000" stroke-width="0.6" stroke-linejoin="round"/>
<ellipse cx="1319.0" cy="593.3" rx="1.5" ry="4.3" fill="#505068" stroke="#000" stroke-width="0.5"/>
<path d="M1292.0 586.5 1295.5 582.8 1303.0 582.8 1306.0 586.5 1306.0 597.0 1303.0 601.4 1292.0 601.4Z" fill="#2f8a2f" stroke="#000" stroke-width="0.6" stroke-linejoin="round"/>
<path d="M1286.5 590.0 L1302 590.0 Q1305.300 590.0 1305.300 595.7 Q1305.300 601.4 1302 601.4 L1286.5 601.4 Z" fill="url(#gSteel)" stroke="#000" stroke-width="0.6" stroke-linejoin="round"/>
<ellipse cx="1303.2" cy="595.7" rx="1.5" ry="4.4" fill="#505068" stroke="#000" stroke-width="0.5"/>
<path d="M1276.8 590.5 1280.0 586.0 1286.0 586.0 1289.0 590.5 1289.0 599.5 1286.0 603.8 1280.0 603.8 1276.8 599.5Z" fill="#2f8a2f" stroke="#000" stroke-width="0.6" stroke-linejoin="round"/>
<path d="M1280.0 586.0 1280.0 603.8" fill="none" stroke="#185018" stroke-width="0.6"/>
<path d="M1286.0 586.0 1286.0 603.8" fill="none" stroke="#185018" stroke-width="0.6"/>
<path d="M1014.5 459.0 1029.0 459.0 1029.0 475.0 1014.5 475.0Z" fill="url(#gGrnH)" stroke="#000" stroke-width="0.6" stroke-linejoin="round"/>
<path d="M1038.0 443.0 Q1030.0 444.5 1029.0 451.5 L1029.0 485.5 Q1030.0 492.5 1038.0 494.0 A6 25.5 0 0 1 1038.0 443.0 Z" fill="url(#gSal)" stroke="#000" stroke-width="0.7" stroke-linejoin="round"/>
<path d="M1037.5 441.0 L1299.0 449.0 A10.0 26.8 0 0 1 1299.0 502.5 L1037.5 496.0 A5.5 27.5 0 0 1 1037.5 441.0 Z" fill="url(#gSal)" stroke="#000" stroke-width="0.8" stroke-linejoin="round"/>
<ellipse cx="1299.0" cy="475.8" rx="10.0" ry="26.8" fill="url(#gSal)" stroke="#000" stroke-width="0.8"/>
<ellipse cx="1300.2" cy="475.8" rx="7.8" ry="24.2" fill="#643030" stroke="#000" stroke-width="0.6"/>
<path d="M1019.0 645.0 1028.0 645.0 1028.0 661.0 1019.0 661.0Z" fill="url(#gGrnH)" stroke="#000" stroke-width="0.6" stroke-linejoin="round"/>
<path d="M1036.5 629.5 Q1028.5 631.0 1027.5 638.0 L1027.5 671.5 Q1028.5 678.5 1036.5 680.0 A6 25.2 0 0 1 1036.5 629.5 Z" fill="url(#gSal)" stroke="#000" stroke-width="0.7" stroke-linejoin="round"/>
<path d="M1036.0 627.5 L1298.0 635.0 A10.0 27.0 0 0 1 1298.0 689.0 L1036.0 681.0 A5.5 26.8 0 0 1 1036.0 627.5 Z" fill="url(#gSal)" stroke="#000" stroke-width="0.8" stroke-linejoin="round"/>
<ellipse cx="1298.0" cy="662.0" rx="10.0" ry="27.0" fill="url(#gSal)" stroke="#000" stroke-width="0.8"/>
<ellipse cx="1299.2" cy="662.0" rx="7.8" ry="24.5" fill="#643030" stroke="#000" stroke-width="0.6"/>
<path d="M977.5 772 L983 772 L983 774 L1013 774 L1013 786.5 L983 786.5 L983 789 L977.5 789 Q975 780 977.5 772Z" fill="url(#gGrnH)" stroke="#000" stroke-width="0.6" stroke-linejoin="round"/>
<path d="M1021.5 756.0 Q1013.5 757.5 1012.5 764.5 L1012.5 799.0 Q1013.5 806.0 1021.5 807.5 A6 25.8 0 0 1 1021.5 756.0 Z" fill="url(#gSal)" stroke="#000" stroke-width="0.7" stroke-linejoin="round"/>
<path d="M1021.0 754.0 L1283.0 761.0 A10.0 27.2 0 0 1 1283.0 815.5 L1021.0 809.0 A5.5 27.5 0 0 1 1021.0 754.0 Z" fill="url(#gSal)" stroke="#000" stroke-width="0.8" stroke-linejoin="round"/>
<ellipse cx="1283.0" cy="788.2" rx="10.0" ry="27.2" fill="url(#gSal)" stroke="#000" stroke-width="0.8"/>
<ellipse cx="1284.2" cy="788.2" rx="7.8" ry="24.8" fill="#643030" stroke="#000" stroke-width="0.6"/>
</g>
<defs><linearGradient id="icBlue" x1="0" y1="0" x2="1" y2="0"><stop offset="0" stop-color="#b8cef4"/><stop offset=".45" stop-color="#6c8fd8"/><stop offset="1" stop-color="#2c4a98"/></linearGradient><linearGradient id="icPale" x1="0" y1="0" x2="1" y2="0"><stop offset="0" stop-color="#f0f4fc"/><stop offset="1" stop-color="#b0c0e0"/></linearGradient><linearGradient id="icPage" x1="0" y1="0" x2="1" y2="1"><stop offset="0" stop-color="#ffffff"/><stop offset="1" stop-color="#a8c0f0"/></linearGradient><radialGradient id="icGlass" cx=".4" cy=".35" r=".7"><stop offset="0" stop-color="#f4faff"/><stop offset="1" stop-color="#88b0e0"/></radialGradient><linearGradient id="icRef" x1="0" y1="0" x2="0" y2="1"><stop offset="0" stop-color="#9cc0f0"/><stop offset="1" stop-color="#3c6cc0"/></linearGradient><linearGradient id="icGrn" x1="0" y1="0" x2="0" y2="1"><stop offset="0" stop-color="#70e040"/><stop offset="1" stop-color="#1c8c1c"/></linearGradient><linearGradient id="icFold" x1="0" y1="0" x2="0" y2="1"><stop offset="0" stop-color="#fce890"/><stop offset="1" stop-color="#e8b040"/></linearGradient><radialGradient id="icBall" cx=".35" cy=".3" r=".8"><stop offset="0" stop-color="#fff"/><stop offset="1" stop-color="#505050"/></radialGradient></defs>
<g id="icons">
<g transform="translate(2.0 3.0)"><rect width="16" height="16" fill="#6cb830"/><path d="M2.5 4.5h3l2.7 7l2.7-7h2.8l-4.2 9.5h-2.7z" fill="#fff"/><circle cx="5.2" cy="2.6" r="1" fill="#fff"/></g>
<rect x="20" y="6" width="1" height="12" fill="#a0a0a0"/>
<g transform="translate(33.0 5.0)"><path d="M0 0h9l4 4v11h-13z" fill="url(#icPage)" stroke="#000" stroke-width="1"/><path d="M9 0v4h4" fill="#fff" stroke="#000" stroke-width=".8"/></g>
<g transform="translate(55.0 4.0)"><path d="M0 4h5l1.5 2h7v10h-13.5z" fill="#e8b848" stroke="#b08020" stroke-width=".6"/><path d="M2.5 8h15l-2.5 8h-15z" fill="url(#icFold)" stroke="#b08020" stroke-width=".6"/><path d="M5 7q1 -6 8 -5.5v-2.6l5 4.6l-5 4.4v-2.6q-4 -.4 -8 1.7z" fill="#30b030" stroke="#107010" stroke-width=".5"/></g>
<g transform="translate(79.0 3.0)"><path d="M0 0h5l1.5 2h1v5h-7.5z" fill="#e8b848" stroke="#b08020" stroke-width=".6"/><path d="M2.5 4h9l-2.5 3h-9z" fill="url(#icFold)" stroke="#b08020" stroke-width=".6"/><path d="M0 8h5l1.5 2h1v5h-7.5z" fill="#e8b848" stroke="#b08020" stroke-width=".6"/><path d="M2.5 12h9l-2.5 3h-9z" fill="url(#icFold)" stroke="#b08020" stroke-width=".6"/><path d="M9 4h3v3M9 12h3v-3" fill="none" stroke="#40b040" stroke-width=".8"/><path d="M10 5h4l4 4v6h-8z" fill="url(#icPage)" stroke="#000" stroke-width="1"/><path d="M14 5v4h4" fill="#fff" stroke="#000" stroke-width=".8"/></g>
<g transform="translate(103.0 4.0)"><g transform="translate(0 0) scale(1.0)"><rect x="0" y="0" width="16" height="16" rx="1" fill="#3c62b4" stroke="#20387c" stroke-width=".8"/><rect x="2.2" y="1" width="11.6" height="8" fill="#f4f4f4"/><rect x="2.2" y="1" width="11.6" height="2" fill="#e04838"/><path d="M3.5 5h9M3.5 7h9" stroke="#b0b0b0" stroke-width=".6"/><rect x="4" y="10.5" width="8" height="5.5" fill="#c8d0e0"/><rect x="5.2" y="11.3" width="2.4" height="4" fill="#20387c"/></g></g>
<g transform="translate(127.0 3.0)"><g transform="translate(5 0) scale(0.71875)"><rect x="0" y="0" width="16" height="16" rx="1" fill="#3c62b4" stroke="#20387c" stroke-width=".8"/><rect x="2.2" y="1" width="11.6" height="8" fill="#f4f4f4"/><rect x="2.2" y="1" width="11.6" height="2" fill="#e04838"/><path d="M3.5 5h9M3.5 7h9" stroke="#b0b0b0" stroke-width=".6"/><rect x="4" y="10.5" width="8" height="5.5" fill="#c8d0e0"/><rect x="5.2" y="11.3" width="2.4" height="4" fill="#20387c"/></g><g transform="translate(0 5) scale(0.71875)"><rect x="0" y="0" width="16" height="16" rx="1" fill="#3c62b4" stroke="#20387c" stroke-width=".8"/><rect x="2.2" y="1" width="11.6" height="8" fill="#f4f4f4"/><rect x="2.2" y="1" width="11.6" height="2" fill="#e04838"/><path d="M3.5 5h9M3.5 7h9" stroke="#b0b0b0" stroke-width=".6"/><rect x="4" y="10.5" width="8" height="5.5" fill="#c8d0e0"/><rect x="5.2" y="11.3" width="2.4" height="4" fill="#20387c"/></g></g>
<g transform="translate(149.0 2.0)"><g transform="translate(0 0) scale(0.6875)"><rect x="0" y="0" width="16" height="16" rx="1" fill="#3c62b4" stroke="#20387c" stroke-width=".8"/><rect x="2.2" y="1" width="11.6" height="8" fill="#f4f4f4"/><rect x="2.2" y="1" width="11.6" height="2" fill="#e04838"/><path d="M3.5 5h9M3.5 7h9" stroke="#b0b0b0" stroke-width=".6"/><rect x="4" y="10.5" width="8" height="5.5" fill="#c8d0e0"/><rect x="5.2" y="11.3" width="2.4" height="4" fill="#20387c"/></g><path d="M9 9l4.5 -2l4.5 2v6.3l-4.5 2l-4.5 -2z" fill="#505050" stroke="#202020" stroke-width=".6"/><path d="M9 9l4.5 -2l4.5 2l-4.5 2z" fill="#a8a8a8"/><path d="M13.5 11v6.3l4.5 -2v-6.3z" fill="#303030"/><path d="M13 5q4 -3 6 1l1.4-.8l-.4 3.6l-3.2-1.4l1.2-.7q-1.6-2.4-4 .2z" fill="#30b030"/></g>
<g transform="translate(175.0 4.0)"><rect x="4" y="0" width="10" height="8" fill="#e8f0ff" stroke="#506090" stroke-width=".7"/><path d="M9 1l3 3.4h-1.8v2.4h-2.4v-2.4h-1.8z" fill="#20b020"/><path d="M1 8h16l1.5 3v5h-19v-5z" fill="#d8d8d8" stroke="#606060" stroke-width=".7"/><rect x="1" y="12.5" width="16" height="2" fill="#f8f8f8"/></g>
<g transform="translate(197.0 2.0)"><circle cx="10" cy="10" r="9.3" fill="#5c9c3c" stroke="#386820" stroke-width=".8"/><path d="M13 13l5 5" stroke="#b0b0b0" stroke-width="2.8" stroke-linecap="round"/><circle cx="9" cy="9" r="5.8" fill="url(#icGlass)" stroke="#8890a0" stroke-width="1.3"/><path d="M9 5.500v3.500l2 1" stroke="#5080c0" stroke-width=".7" fill="none"/></g>
<g transform="translate(224.0 4.0)"><g transform="translate(0 0)"><path d="M0 6L7 0V3.6Q15 4 14 13Q12.5 8.5 7 8.6V12Z" fill="#c0c0c0" stroke="#707070" stroke-width=".6"/></g></g>
<g transform="translate(247.0 4.0)"><g transform="translate(15 0) scale(-1 1)"><path d="M0 6L7 0V3.6Q15 4 14 13Q12.5 8.5 7 8.6V12Z" fill="#c0c0c0" stroke="#707070" stroke-width=".6"/></g></g>
<g transform="translate(270.0 3.0)"><g transform="translate(4 0)"><path d="M0 6L7 0V3.6Q15 4 14 13Q12.5 8.5 7 8.6V12Z" fill="#6c9cdc" stroke="#2c5ca8" stroke-width=".6"/></g><path d="M0 9h6l-2 3.4l2 3.6h-6l2-3.6z" fill="#c8a048" stroke="#6c5018" stroke-width=".6"/></g>
<path d="M295 9.5h7" stroke="#000" stroke-width="1"/><path d="M295 12h7l-3.5 3.6z" fill="#000"/>
<rect x="312" y="6" width="1" height="12" fill="#a0a0a0"/>
<g transform="translate(23.0 68.0)"><path d="M1 2h12l4 3h-12z" fill="#8090f0"/><path d="M1 5h12l4 2h-12z" fill="#f4f4f4" stroke="#909090" stroke-width=".4"/><path d="M1 8h12l3 2h-12z" fill="#c0c0c8" stroke="#808080" stroke-width=".4"/><ellipse cx="11" cy="15" rx="7.5" ry="4.6" fill="#b88868" stroke="#604030" stroke-width=".6"/><circle cx="8" cy="15.5" r="1.8" fill="#2040f0"/><circle cx="12" cy="16.6" r="1.8" fill="#10c020"/><circle cx="14.6" cy="13.6" r="1.8" fill="#e01818"/><path d="M19 1L12 12" stroke="#a85820" stroke-width="1.6"/><path d="M12.4 11.2l-2.4 3.6" stroke="#e8e8e8" stroke-width="2"/></g>
<g transform="translate(48.0 68.0)"><path d="M8 0h7l4 4v9h-11z" fill="url(#icPage)" stroke="#000" stroke-width="1"/><path d="M15 0v4h4" fill="#fff" stroke="#000" stroke-width=".8"/><path d="M3 4h6l4 4v8h-10z" fill="url(#icPage)" stroke="#000" stroke-width="1"/><path d="M9 4v4h4" fill="#fff" stroke="#000" stroke-width=".8"/><g transform="translate(0 10.5)"><path d="M0 7 Q4 1 10 0.8 Q16 1 20 6 Q15 3.5 10 3.6 Q4 4 0 7Z" fill="#2c3444"/><path d="M1 7.5 Q5 3 10 3 Q15 3 19 6.5 Q15 9.5 10 9.6 Q5 9.5 1 7.5Z" fill="#a4b0d0"/><ellipse cx="10" cy="6" rx="4.6" ry="3.5" fill="#44629a"/><ellipse cx="10" cy="6" rx="2" ry="1.8" fill="#1c2c4c"/><circle cx="9" cy="5" r=".8" fill="#e0ecff"/><path d="M1 7.8 Q5 10 10 10 Q15 10 19 7 " fill="none" stroke="#b89ca8" stroke-width=".8"/><path d="M2 5l-1.5-2M4.5 3l-1-2.2M7.5 1.8L7 -.3M11 1.4l.4-1.8M14.5 2.2l1.2-1.8M17.5 4l1.6-1.5" stroke="#2c3444" stroke-width=".7"/></g></g>
<g transform="translate(74.0 68.0)"><g transform="translate(0 0.5)"><path d="M0 7 Q4 1 10 0.8 Q16 1 20 6 Q15 3.5 10 3.6 Q4 4 0 7Z" fill="#2c3444"/><path d="M1 7.5 Q5 3 10 3 Q15 3 19 6.5 Q15 9.5 10 9.6 Q5 9.5 1 7.5Z" fill="#a4b0d0"/><ellipse cx="10" cy="6" rx="4.6" ry="3.5" fill="#44629a"/><ellipse cx="10" cy="6" rx="2" ry="1.8" fill="#1c2c4c"/><circle cx="9" cy="5" r=".8" fill="#e0ecff"/><path d="M1 7.8 Q5 10 10 10 Q15 10 19 7 " fill="none" stroke="#b89ca8" stroke-width=".8"/><path d="M2 5l-1.5-2M4.5 3l-1-2.2M7.5 1.8L7 -.3M11 1.4l.4-1.8M14.5 2.2l1.2-1.8M17.5 4l1.6-1.5" stroke="#2c3444" stroke-width=".7"/></g><path d="M1 14h8M5 10v8" stroke="#50e020" stroke-width="2.6"/><path d="M10 14q5 -4 8 -1q2 3 -3 5l2 3" fill="none" stroke="#3878e0" stroke-width="1.6"/></g>
<g transform="translate(100.0 68.0)"><g transform="translate(0 0.5)"><path d="M0 7 Q4 1 10 0.8 Q16 1 20 6 Q15 3.5 10 3.6 Q4 4 0 7Z" fill="#2c3444"/><path d="M1 7.5 Q5 3 10 3 Q15 3 19 6.5 Q15 9.5 10 9.6 Q5 9.5 1 7.5Z" fill="#a4b0d0"/><ellipse cx="10" cy="6" rx="4.6" ry="3.5" fill="#44629a"/><ellipse cx="10" cy="6" rx="2" ry="1.8" fill="#1c2c4c"/><circle cx="9" cy="5" r=".8" fill="#e0ecff"/><path d="M1 7.8 Q5 10 10 10 Q15 10 19 7 " fill="none" stroke="#b89ca8" stroke-width=".8"/><path d="M2 5l-1.5-2M4.5 3l-1-2.2M7.5 1.8L7 -.3M11 1.4l.4-1.8M14.5 2.2l1.2-1.8M17.5 4l1.6-1.5" stroke="#2c3444" stroke-width=".7"/></g><path d="M1.0 14.5h9.0" stroke="#e8e000" stroke-width="2.6"/><path d="M10 14q5 -4 8 -1q2 3 -3 5l2 3" fill="none" stroke="#3878e0" stroke-width="1.6"/></g>
<rect x="124.5" y="66.5" width="23" height="23" fill="#fce690" stroke="#e8c050"/>
<g transform="translate(126.0 68.0)"><g transform="translate(0 0)"><path d="M0 7 Q4 1 10 0.8 Q16 1 20 6 Q15 3.5 10 3.6 Q4 4 0 7Z" fill="#2c3444"/><path d="M1 7.5 Q5 3 10 3 Q15 3 19 6.5 Q15 9.5 10 9.6 Q5 9.5 1 7.5Z" fill="#a4b0d0"/><ellipse cx="10" cy="6" rx="4.6" ry="3.5" fill="#44629a"/><ellipse cx="10" cy="6" rx="2" ry="1.8" fill="#1c2c4c"/><circle cx="9" cy="5" r=".8" fill="#e0ecff"/><path d="M1 7.8 Q5 10 10 10 Q15 10 19 7 " fill="none" stroke="#b89ca8" stroke-width=".8"/><path d="M2 5l-1.5-2M4.5 3l-1-2.2M7.5 1.8L7 -.3M11 1.4l.4-1.8M14.5 2.2l1.2-1.8M17.5 4l1.6-1.5" stroke="#2c3444" stroke-width=".7"/></g><rect x="1.5" y="8" width="6" height="12" rx="2" fill="#181818"/><circle cx="4.5" cy="11.2" r="2.1" fill="#f0c000"/><circle cx="4.5" cy="16.8" r="2.1" fill="#10d010"/><rect x="12.5" y="8" width="6" height="12" rx="2" fill="#181818"/><circle cx="15.5" cy="11.2" r="2.1" fill="#e01010"/><circle cx="15.5" cy="16.8" r="2.1" fill="#f0b000"/></g>
<g transform="translate(152.0 68.0)"><g transform="translate(0 0)"><path d="M0 7 Q4 1 10 0.8 Q16 1 20 6 Q15 3.5 10 3.6 Q4 4 0 7Z" fill="#2c3444"/><path d="M1 7.5 Q5 3 10 3 Q15 3 19 6.5 Q15 9.5 10 9.6 Q5 9.5 1 7.5Z" fill="#a4b0d0"/><ellipse cx="10" cy="6" rx="4.6" ry="3.5" fill="#44629a"/><ellipse cx="10" cy="6" rx="2" ry="1.8" fill="#1c2c4c"/><circle cx="9" cy="5" r=".8" fill="#e0ecff"/><path d="M1 7.8 Q5 10 10 10 Q15 10 19 7 " fill="none" stroke="#b89ca8" stroke-width=".8"/><path d="M2 5l-1.5-2M4.5 3l-1-2.2M7.5 1.8L7 -.3M11 1.4l.4-1.8M14.5 2.2l1.2-1.8M17.5 4l1.6-1.5" stroke="#2c3444" stroke-width=".7"/></g><path d="M5.1 11.2A5.2 5.2 0 0 1 14.5 10.4" fill="none" stroke="#40c020" stroke-width="3"/><path d="M17.8 8.5L11.3 12.3L16.5 13.9Z" fill="#40c020"/><path d="M14.9 14.8A5.2 5.2 0 0 1 5.5 15.6" fill="none" stroke="#e8d800" stroke-width="3"/><path d="M2.2 17.5L8.7 13.7L3.5 12.1Z" fill="#e8d800"/></g>
<g transform="translate(178.0 68.0)"><g transform="translate(0 0.5)"><path d="M0 7 Q4 1 10 0.8 Q16 1 20 6 Q15 3.5 10 3.6 Q4 4 0 7Z" fill="#2c3444"/><path d="M1 7.5 Q5 3 10 3 Q15 3 19 6.5 Q15 9.5 10 9.6 Q5 9.5 1 7.5Z" fill="#a4b0d0"/><ellipse cx="10" cy="6" rx="4.6" ry="3.5" fill="#44629a"/><ellipse cx="10" cy="6" rx="2" ry="1.8" fill="#1c2c4c"/><circle cx="9" cy="5" r=".8" fill="#e0ecff"/><path d="M1 7.8 Q5 10 10 10 Q15 10 19 7 " fill="none" stroke="#b89ca8" stroke-width=".8"/><path d="M2 5l-1.5-2M4.5 3l-1-2.2M7.5 1.8L7 -.3M11 1.4l.4-1.8M14.5 2.2l1.2-1.8M17.5 4l1.6-1.5" stroke="#2c3444" stroke-width=".7"/></g><path d="M1.1 12.5h6.8M4.5 9.1v6.8" stroke="#50e020" stroke-width="2.6"/><path d="M7 19L14 10" stroke="#202020" stroke-width="1.3"/><path d="M11.5 17.5h8" stroke="#e8e000" stroke-width="2.6"/></g>
<g transform="translate(204.0 68.0)"><g transform="translate(0 0.5)"><path d="M0 7 Q4 1 10 0.8 Q16 1 20 6 Q15 3.5 10 3.6 Q4 4 0 7Z" fill="#2c3444"/><path d="M1 7.5 Q5 3 10 3 Q15 3 19 6.5 Q15 9.5 10 9.6 Q5 9.5 1 7.5Z" fill="#a4b0d0"/><ellipse cx="10" cy="6" rx="4.6" ry="3.5" fill="#44629a"/><ellipse cx="10" cy="6" rx="2" ry="1.8" fill="#1c2c4c"/><circle cx="9" cy="5" r=".8" fill="#e0ecff"/><path d="M1 7.8 Q5 10 10 10 Q15 10 19 7 " fill="none" stroke="#b89ca8" stroke-width=".8"/><path d="M2 5l-1.5-2M4.5 3l-1-2.2M7.5 1.8L7 -.3M11 1.4l.4-1.8M14.5 2.2l1.2-1.8M17.5 4l1.6-1.5" stroke="#2c3444" stroke-width=".7"/></g><path d="M7.0 14.5h9.0M11.5 10.0v9.0" stroke="#50e020" stroke-width="3"/></g>
<g transform="translate(230.0 68.0)"><g transform="translate(0 0.5)"><path d="M0 7 Q4 1 10 0.8 Q16 1 20 6 Q15 3.5 10 3.6 Q4 4 0 7Z" fill="#2c3444"/><path d="M1 7.5 Q5 3 10 3 Q15 3 19 6.5 Q15 9.5 10 9.6 Q5 9.5 1 7.5Z" fill="#a4b0d0"/><ellipse cx="10" cy="6" rx="4.6" ry="3.5" fill="#44629a"/><ellipse cx="10" cy="6" rx="2" ry="1.8" fill="#1c2c4c"/><circle cx="9" cy="5" r=".8" fill="#e0ecff"/><path d="M1 7.8 Q5 10 10 10 Q15 10 19 7 " fill="none" stroke="#b89ca8" stroke-width=".8"/><path d="M2 5l-1.5-2M4.5 3l-1-2.2M7.5 1.8L7 -.3M11 1.4l.4-1.8M14.5 2.2l1.2-1.8M17.5 4l1.6-1.5" stroke="#2c3444" stroke-width=".7"/></g><path d="M6.5 13.5h11.0" stroke="#e8e000" stroke-width="3"/></g>
<g transform="translate(275.0 69.0)"><path d="M3.0 7.0A5.8 5.8 0 0 1 13.5 6.1" fill="none" stroke="#6c9ce0" stroke-width="4.2"/><path d="M18.1 3.5L9.0 8.7L16.4 11.0Z" fill="#6c9ce0"/><path d="M14.0 11.0A5.8 5.8 0 0 1 3.5 11.9" fill="none" stroke="#4c7cd0" stroke-width="4.2"/><path d="M-1.1 14.5L8.0 9.3L0.6 7.0Z" fill="#4c7cd0"/></g>
<g transform="translate(305.0 69.0)"><path d="M0 2.6V14.4A5.5 2.6 0 0 0 11 14.4V2.6" fill="none" stroke="#202020" stroke-width="1.1"/><ellipse cx="5.5" cy="2.6" rx="5.5" ry="2.6" fill="none" stroke="#202020" stroke-width="1.1"/><path d="M0 14.4A5.5 2.6 0 0 1 11 14.4" fill="none" stroke="#202020" stroke-width=".7"/></g>
<g transform="translate(331.0 69.0)"><path d="M0 2.6V14.4A5.5 2.6 0 0 0 11 14.4V2.6" fill="none" stroke="#202020" stroke-width="1.1"/><ellipse cx="5.5" cy="2.6" rx="5.5" ry="2.6" fill="none" stroke="#202020" stroke-width="1.1"/></g>
<g transform="translate(357.0 69.0)"><path d="M0 2.6V14.4A5.5 2.6 0 0 0 11 14.4V2.6" fill="none" stroke="#303030" stroke-width="1.1"/><ellipse cx="5.5" cy="2.6" rx="5.5" ry="2.6" fill="none" stroke="#303030" stroke-width="1.1"/><path d="M0 14.4A5.5 2.6 0 0 1 11 14.4" fill="none" stroke="#303030" stroke-width=".7"/></g>
<g transform="translate(383.0 69.0)"><ellipse cx="9.5" cy="16" rx="6.5" ry="2" fill="#000" opacity=".35"/><path d="M0 2.6V14.4A5.5 2.6 0 0 0 11 14.4V2.6" fill="url(#icBlue)" stroke="#10d8f0" stroke-width="1.2"/><ellipse cx="5.5" cy="2.6" rx="5.5" ry="2.6" fill="#c0d4f8" stroke="#10d8f0" stroke-width="1.2"/></g>
<rect x="401.5" y="66.5" width="23" height="23" fill="#fce690" stroke="#e8c050"/>
<g transform="translate(409.0 69.0)"><ellipse cx="9.5" cy="16" rx="6.5" ry="2" fill="#000" opacity=".35"/><path d="M0 2.6V14.4A5.5 2.6 0 0 0 11 14.4V2.6" fill="url(#icBlue)" stroke="#101010" stroke-width="1.2"/><ellipse cx="5.5" cy="2.6" rx="5.5" ry="2.6" fill="#7c9ce0" stroke="#101010" stroke-width="1.2"/></g>
<g transform="translate(435.0 69.0)"><ellipse cx="9.5" cy="16" rx="6.5" ry="2" fill="#000" opacity=".35"/><path d="M0 2.6V14.4A5.5 2.6 0 0 0 11 14.4V2.6" fill="url(#icPale)" stroke="#20d8f0" stroke-width="1.2"/><ellipse cx="5.5" cy="2.6" rx="5.5" ry="2.6" fill="#e8f0fc" stroke="#20d8f0" stroke-width="1.2"/></g>
<g transform="translate(461.0 69.0)"><ellipse cx="9.5" cy="16" rx="6.5" ry="2" fill="#000" opacity=".35"/><path d="M0 2.6V14.4A5.5 2.6 0 0 0 11 14.4V2.6" fill="url(#icPale)" stroke="#606880" stroke-width="1.1"/><ellipse cx="5.5" cy="2.6" rx="5.5" ry="2.6" fill="#e8f0fc" stroke="#606880" stroke-width="1.1"/></g>
<g transform="translate(487.0 69.0)"><path d="M0 2.6V14.4A5.5 2.6 0 0 0 11 14.4V2.6" fill="#e8e8e8" stroke="#202020" stroke-width="1.1"/><ellipse cx="5.5" cy="2.6" rx="5.5" ry="2.6" fill="#e8e8e8" stroke="#202020" stroke-width="1.1"/><path d="M2 3l3 13M5 3l-2 13M8 3l-2 13M6 3l4 13M10 3l-3 13" stroke="#202020" stroke-width=".6" fill="none"/></g>
<g transform="translate(506.0 67.0)"><path d="M0 2.6V10.4A4.5 2.6 0 0 0 9 10.4V2.6" fill="#f0f0f0" stroke="#505050" stroke-width="0.9"/><ellipse cx="4.5" cy="2.6" rx="4.5" ry="2.6" fill="#f0f0f0" stroke="#505050" stroke-width="0.9"/><path d="M9 8.6V17.4A5.0 2.6 0 0 0 19 17.4V8.6" fill="url(#icBlue)" stroke="#182858" stroke-width="1"/><ellipse cx="14.0" cy="8.6" rx="5.0" ry="2.6" fill="#7c9ce0" stroke="#182858" stroke-width="1"/><path d="M10 1q4-2 6 2l1.2-.6l-.2 3l-3-.8l1-.6q-1.6-2-3.800-.4z" fill="#20b020"/><path d="M3 15q1 4 5 4v1.400l-3-1.800l3-1.800v1q-2.600 0-3.400-2.800z" fill="#20b020"/></g>
<g transform="translate(535.0 68.0)"><path d="M0 2.6V13.4A5.5 2.6 0 0 0 11 13.4V2.6" fill="url(#icBlue)" stroke="#182858" stroke-width="1"/><ellipse cx="5.5" cy="2.6" rx="5.5" ry="2.6" fill="#7c9ce0" stroke="#182858" stroke-width="1"/><path d="M8.2 10.9A4.6 4.6 0 0 1 16.5 10.2" fill="none" stroke="#5c8cd8" stroke-width="2.8"/><path d="M19.5 8.4L13.5 11.9L18.4 13.5Z" fill="#5c8cd8"/><path d="M16.8 14.1A4.6 4.6 0 0 1 8.5 14.8" fill="none" stroke="#5c8cd8" stroke-width="2.8"/><path d="M5.5 16.5L11.5 13.0L6.6 11.5Z" fill="#5c8cd8"/></g>
<g transform="translate(560.0 68.0)"><rect x="1" y="2" width="17" height="12" fill="#486088" stroke="#9098a8" stroke-width="1.4"/><rect x="6" y="15" width="7" height="2" fill="#9098a8"/><path d="M6 6l9 9" stroke="#e8e8e8" stroke-width="2.2" stroke-linecap="round"/><circle cx="5.6" cy="5.6" r="2.4" fill="none" stroke="#e8e8e8" stroke-width="1.6"/><path d="M15 5.5l-9 9" stroke="#3878d0" stroke-width="2.4" stroke-linecap="round"/><path d="M15 5.5l-3.4 3.4" stroke="#d0d0d0" stroke-width="2.2" stroke-linecap="round"/></g>
<g transform="translate(602.0 68.0)"><g transform="translate(0 0)"><path d="M10 3l4.5 -2.5l4.5 2.5l-4.5 2.5z" fill="#f4f4f4" stroke="#404040" stroke-width=".6"/><path d="M10 3v6.3l4.5 2.5v-6.3z" fill="#a0a0a0" stroke="#404040" stroke-width=".6"/><path d="M14.5 5.5v6.3l4.5 -2.5v-6.3z" fill="#686868" stroke="#404040" stroke-width=".6"/><path d="M1 3l4.5 -2.5l4.5 2.5l-4.5 2.5z" fill="#f4f4f4" stroke="#404040" stroke-width=".6"/><path d="M1 3v6.3l4.5 2.5v-6.3z" fill="#a0a0a0" stroke="#404040" stroke-width=".6"/><path d="M5.5 5.5v6.3l4.5 -2.5v-6.3z" fill="#686868" stroke="#404040" stroke-width=".6"/></g><path d="M1 15h8M5 11v8" stroke="#50e020" stroke-width="2.6"/><path d="M10 15q5 -4 8 -1q2 3 -3 5l2 3" fill="none" stroke="#3878e0" stroke-width="1.6"/></g>
<g transform="translate(628.0 68.0)"><g transform="translate(0 0)"><path d="M10 3l4.5 -2.5l4.5 2.5l-4.5 2.5z" fill="#f4f4f4" stroke="#404040" stroke-width=".6"/><path d="M10 3v6.3l4.5 2.5v-6.3z" fill="#a0a0a0" stroke="#404040" stroke-width=".6"/><path d="M14.5 5.5v6.3l4.5 -2.5v-6.3z" fill="#686868" stroke="#404040" stroke-width=".6"/><path d="M1 3l4.5 -2.5l4.5 2.5l-4.5 2.5z" fill="#f4f4f4" stroke="#404040" stroke-width=".6"/><path d="M1 3v6.3l4.5 2.5v-6.3z" fill="#a0a0a0" stroke="#404040" stroke-width=".6"/><path d="M5.5 5.5v6.3l4.5 -2.5v-6.3z" fill="#686868" stroke="#404040" stroke-width=".6"/></g><rect x="1.5" y="8" width="6" height="12" rx="2" fill="#181818"/><circle cx="4.5" cy="11.2" r="2.1" fill="#f0c000"/><circle cx="4.5" cy="16.8" r="2.1" fill="#10d010"/><rect x="12.5" y="8" width="6" height="12" rx="2" fill="#181818"/><circle cx="15.5" cy="11.2" r="2.1" fill="#e01010"/><circle cx="15.5" cy="16.8" r="2.1" fill="#f0b000"/></g>
<g transform="translate(654.0 68.0)"><g transform="translate(0 0)"><path d="M10 3l4.5 -2.5l4.5 2.5l-4.5 2.5z" fill="#f4f4f4" stroke="#404040" stroke-width=".6"/><path d="M10 3v6.3l4.5 2.5v-6.3z" fill="#a0a0a0" stroke="#404040" stroke-width=".6"/><path d="M14.5 5.5v6.3l4.5 -2.5v-6.3z" fill="#686868" stroke="#404040" stroke-width=".6"/><path d="M1 3l4.5 -2.5l4.5 2.5l-4.5 2.5z" fill="#f4f4f4" stroke="#404040" stroke-width=".6"/><path d="M1 3v6.3l4.5 2.5v-6.3z" fill="#a0a0a0" stroke="#404040" stroke-width=".6"/><path d="M5.5 5.5v6.3l4.5 -2.5v-6.3z" fill="#686868" stroke="#404040" stroke-width=".6"/></g><path d="M5.1 11.2A5.2 5.2 0 0 1 14.5 10.4" fill="none" stroke="#40c020" stroke-width="3"/><path d="M17.8 8.5L11.3 12.3L16.5 13.9Z" fill="#40c020"/><path d="M14.9 14.8A5.2 5.2 0 0 1 5.5 15.6" fill="none" stroke="#e8d800" stroke-width="3"/><path d="M2.2 17.5L8.7 13.7L3.5 12.1Z" fill="#e8d800"/></g>
<g transform="translate(680.0 68.0)"><g transform="translate(0 0)"><path d="M10 3l4.5 -2.5l4.5 2.5l-4.5 2.5z" fill="#f4f4f4" stroke="#404040" stroke-width=".6"/><path d="M10 3v6.3l4.5 2.5v-6.3z" fill="#a0a0a0" stroke="#404040" stroke-width=".6"/><path d="M14.5 5.5v6.3l4.5 -2.5v-6.3z" fill="#686868" stroke="#404040" stroke-width=".6"/><path d="M1 3l4.5 -2.5l4.5 2.5l-4.5 2.5z" fill="#f4f4f4" stroke="#404040" stroke-width=".6"/><path d="M1 3v6.3l4.5 2.5v-6.3z" fill="#a0a0a0" stroke="#404040" stroke-width=".6"/><path d="M5.5 5.5v6.3l4.5 -2.5v-6.3z" fill="#686868" stroke="#404040" stroke-width=".6"/></g><path d="M1.1 13h6.8M4.5 9.6v6.8" stroke="#50e020" stroke-width="2.6"/><path d="M7 19L14 10" stroke="#202020" stroke-width="1.3"/><path d="M11.5 18h8" stroke="#e8e000" stroke-width="2.6"/></g>
<g transform="translate(712.0 69.0)"><ellipse cx="9.5" cy="16" rx="6.5" ry="2" fill="#000" opacity=".35"/><path d="M0 2.6V14.4A5.5 2.6 0 0 0 11 14.4V2.6" fill="url(#icBlue)" stroke="#101830" stroke-width="1.1"/><ellipse cx="5.5" cy="2.6" rx="5.5" ry="2.6" fill="#7c9ce0" stroke="#101830" stroke-width="1.1"/><path d="M5.500 5v11" stroke="#101830" stroke-width="1" stroke-dasharray="2.500 1.500"/></g>
<g transform="translate(738.0 69.0)"><ellipse cx="9.5" cy="16" rx="6.5" ry="2" fill="#000" opacity=".35"/><path d="M0 2.6V14.4A5.5 2.6 0 0 0 11 14.4V2.6" fill="url(#icBlue)" stroke="#101830" stroke-width="1.1"/><ellipse cx="5.5" cy="2.6" rx="5.5" ry="2.6" fill="#7c9ce0" stroke="#101830" stroke-width="1.1"/><path d="M4 4v12M7.500 4v12" stroke="#e8e040" stroke-width="1.600"/></g>
<g transform="translate(764.0 69.0)"><ellipse cx="10.0" cy="16" rx="7.0" ry="2" fill="#000" opacity=".35"/><path d="M0 2.6V14.4A6.0 2.6 0 0 0 12 14.4V2.6" fill="#d8e8f4" stroke="#18d8f0" stroke-width="1.2"/><ellipse cx="6.0" cy="2.6" rx="6.0" ry="2.6" fill="#e8f4fc" stroke="#18d8f0" stroke-width="1.2"/><path d="M2.500 9l3 4.500l5.500-8" stroke="#20c020" stroke-width="2.600" fill="none"/></g>
<g transform="translate(788.0 69.0)"><ellipse cx="10.0" cy="16" rx="7.0" ry="2" fill="#000" opacity=".35"/><path d="M0 2.6V14.4A6.0 2.6 0 0 0 12 14.4V2.6" fill="#d0dcf0" stroke="#18d8f0" stroke-width="1.2"/><ellipse cx="6.0" cy="2.6" rx="6.0" ry="2.6" fill="#e8f4fc" stroke="#18d8f0" stroke-width="1.2"/><rect x="9.500" y="-2" width="5.500" height="5.500" fill="#f8d8b0" stroke="#e08010" stroke-width="1"/><circle cx="12" cy=".800" r="1" fill="#e04010"/></g>
<g transform="translate(816.0 69.0)"><path d="M0 2.6V14.4A5.5 2.6 0 0 0 11 14.4V2.6" fill="#e4ecfc" stroke="#4890e0" stroke-width="1"/><ellipse cx="5.5" cy="2.6" rx="5.5" ry="2.6" fill="#e4ecfc" stroke="#4890e0" stroke-width="1"/><path d="M2 3l3 13M5 3l-2 13M8 3l-2 13M6 3l4 13" stroke="#4890e0" stroke-width=".600" fill="none"/></g>
<g transform="translate(838.0 69.0)"><path d="M0 4L9 0L18 4L9 8Z" fill="#7ca0e8"/><path d="M0 4L9 8V17L2.500 12Z" fill="#2c54b0"/><path d="M18 4L9 8V17L15.500 12Z" fill="#183478"/><path d="M0 4L9 0L18 4L15.500 12L9 17L2.500 12Z" fill="none" stroke="#0c1c48" stroke-width=".700"/></g>
<g transform="translate(879.0 68.0)"><path d="M7.640000000000001 10.92l-6 6.5" stroke="#a0a0a0" stroke-width="3" stroke-linecap="round"/><path d="M7.640000000000001 10.92l-6 6.5" stroke="#e0e0e0" stroke-width="1.2" stroke-linecap="round"/><circle cx="11" cy="7" r="5.6" fill="url(#icGlass)" stroke="#9098a8" stroke-width="1.4"/><path d="M11 11l4.0 -2l4.0 2v5.6l-4.0 2l-4.0 -2z" fill="#505050" stroke="#202020" stroke-width=".6"/><path d="M11 11l4.0 -2l4.0 2l-4.0 2z" fill="#a8a8a8"/><path d="M15.0 13v5.6l4.0 -2v-5.6z" fill="#303030"/><path d="M1 3h4M3 1v4M1 7.500h4" stroke="#000" stroke-width="1"/><path d="M9.500 4.500v5l4-2.500z" fill="#b0c8e8" stroke="#7090c0" stroke-width=".500"/></g>
<g transform="translate(905.0 68.0)"><path d="M7.640000000000001 10.92l-6 6.5" stroke="#a0a0a0" stroke-width="3" stroke-linecap="round"/><path d="M7.640000000000001 10.92l-6 6.5" stroke="#e0e0e0" stroke-width="1.2" stroke-linecap="round"/><circle cx="11" cy="7" r="5.6" fill="url(#icGlass)" stroke="#9098a8" stroke-width="1.4"/><path d="M11 11l4.0 -2l4.0 2v5.6l-4.0 2l-4.0 -2z" fill="#505050" stroke="#202020" stroke-width=".6"/><path d="M11 11l4.0 -2l4.0 2l-4.0 2z" fill="#a8a8a8"/><path d="M15.0 13v5.6l4.0 -2v-5.6z" fill="#303030"/><path d="M1 1l4 4M1 1h3.4M1 1v3.4" stroke="#30c020" stroke-width="1.6" fill="none"/><path d="M1 18l4 -4M1 18h3.4M1 18v-3.4" stroke="#30c020" stroke-width="1.6" fill="none"/><path d="M19 1l-4 4M19 1h-3.4M19 1v3.4" stroke="#30c020" stroke-width="1.6" fill="none"/><path d="M9.500 4.500v5l4-2.500z" fill="#b0c8e8" stroke="#7090c0" stroke-width=".500"/></g>
<g transform="translate(931.0 68.0)"><rect x="3" y="4.500" width="14" height="11" fill="#e8ecfc" stroke="#101010" stroke-width="1.200"/><text x="4" y="13.500" font-size="8.500" font-weight="bold" fill="#2030a0" textLength="12">1:1</text><path d="M0 1.5l4 4M0 1.5h3.4M0 1.5v3.4" stroke="#30c020" stroke-width="1.6" fill="none"/><path d="M20 1.5l-4 4M20 1.5h-3.4M20 1.5v3.4" stroke="#30c020" stroke-width="1.6" fill="none"/><path d="M0 18.5l4 -4M0 18.5h3.4M0 18.5v-3.4" stroke="#30c020" stroke-width="1.6" fill="none"/><path d="M20 18.5l-4 -4M20 18.5h-3.4M20 18.5v-3.4" stroke="#30c020" stroke-width="1.6" fill="none"/></g>
<g transform="translate(958.0 68.0)"><path d="M3 16L14 4" stroke="#107010" stroke-width="3.400"/><path d="M3 16L14 4" stroke="#40d030" stroke-width="1.800"/><path d="M9.500 2.500L17.500 .500L15.500 8.500Z" fill="#30c020" stroke="#107010" stroke-width=".600"/><circle cx="3.500" cy="15.500" r="3" fill="url(#icBall)" stroke="#404040" stroke-width=".500"/></g>
<g transform="translate(984.0 68.0)"><path d="M3.5 7.5A5.8 5.8 0 0 1 14.0 6.6" fill="none" stroke="#38c030" stroke-width="4.2"/><path d="M18.6 4.0L9.5 9.2L16.9 11.5Z" fill="#38c030"/><path d="M14.5 11.5A5.8 5.8 0 0 1 4.0 12.4" fill="none" stroke="#28a020" stroke-width="4.2"/><path d="M-0.6 15.0L8.5 9.8L1.1 7.5Z" fill="#28a020"/><path d="M9 5v4M9 14v-4" stroke="#187018" stroke-width="0"/></g>
<g transform="translate(1009.0 68.0)"><g transform="translate(0 -1)"><path d="M0 7 Q4 1 10 0.8 Q16 1 20 6 Q15 3.5 10 3.6 Q4 4 0 7Z" fill="#2c3444"/><path d="M1 7.5 Q5 3 10 3 Q15 3 19 6.5 Q15 9.5 10 9.6 Q5 9.5 1 7.5Z" fill="#a4b0d0"/><ellipse cx="10" cy="6" rx="4.6" ry="3.5" fill="#44629a"/><ellipse cx="10" cy="6" rx="2" ry="1.8" fill="#1c2c4c"/><circle cx="9" cy="5" r=".8" fill="#e0ecff"/><path d="M1 7.8 Q5 10 10 10 Q15 10 19 7 " fill="none" stroke="#b89ca8" stroke-width=".8"/><path d="M2 5l-1.5-2M4.5 3l-1-2.2M7.5 1.8L7 -.3M11 1.4l.4-1.8M14.5 2.2l1.2-1.8M17.5 4l1.6-1.5" stroke="#2c3444" stroke-width=".7"/></g><circle cx="10" cy="13.500" r="6" fill="#f8d030" stroke="#c89010" stroke-width=".600"/><circle cx="8" cy="12" r=".900" fill="#503000"/><circle cx="12" cy="12" r=".900" fill="#503000"/><path d="M6.500 15q3.500 3 7 0" fill="none" stroke="#503000" stroke-width=".800"/></g>
<g transform="translate(1052.0 68.0)"><path d="M1 12L11 6L20 11L10 18Z" fill="#e4ecfc" stroke="#a0b0d0" stroke-width=".600"/><path d="M6.5 13v-8.549999999999999" stroke="#1060f0" stroke-width="1.6"/><path d="M6.5 2.5500000000000007l-2.4 3.6h4.8z" fill="#1060f0"/><path d="M6.5 13l7.6 -4.75" stroke="#20b020" stroke-width="1.6"/><path d="M15.049999999999999 7.300000000000001l-4 .6l2.4 2.6z" fill="#20b020"/><path d="M6.5 13l7.6 4.2749999999999995" stroke="#e01818" stroke-width="1.6"/><path d="M15.525 18.225l-3.8 -1.2l1.4 -2.6z" fill="#e01818"/><circle cx="6.5" cy="13" r="1.8" fill="url(#icBall)" stroke="#404040" stroke-width=".4"/></g>
<g transform="translate(1078.0 68.0)"><path d="M6 6L14 2L20 5L12 9.500Z" fill="#e4ecfc" stroke="#a0b0d0" stroke-width=".500"/><path d="M10.5 6v-4.5" stroke="#1060f0" stroke-width="1.6"/><path d="M10.5 0.5l-2.4 3.6h4.8z" fill="#1060f0"/><path d="M10.5 6l4.0 -2.5" stroke="#20b020" stroke-width="1.6"/><path d="M15.0 3.0l-4 .6l2.4 2.6z" fill="#20b020"/><path d="M10.5 6l4.0 2.25" stroke="#e01818" stroke-width="1.6"/><path d="M15.25 8.75l-3.8 -1.2l1.4 -2.6z" fill="#e01818"/><circle cx="10.5" cy="6" r="1.8" fill="url(#icBall)" stroke="#404040" stroke-width=".4"/><rect x="9" y="13.500" width="10" height="5" fill="#e0e0e0" stroke="#707070" stroke-width="1.200"/><path d="M1.500 18L9 10.500" stroke="#107010" stroke-width="3.600"/><path d="M1.500 18L9 10.500" stroke="#40d030" stroke-width="2"/><path d="M5 7.500L12 7L11.500 14Z" fill="#30c020" stroke="#107010" stroke-width=".600"/><circle cx="2.500" cy="17.500" r="2" fill="url(#icBall)"/></g>
<g transform="translate(1104.0 68.0)"><path d="M8 6L15 2L20 5L13 9.500Z" fill="#e4ecfc" stroke="#a0b0d0" stroke-width=".500"/><path d="M12 6v-4.5" stroke="#1060f0" stroke-width="1.6"/><path d="M12 0.5l-2.4 3.6h4.8z" fill="#1060f0"/><path d="M12 6l4.0 -2.5" stroke="#20b020" stroke-width="1.6"/><path d="M16.5 3.0l-4 .6l2.4 2.6z" fill="#20b020"/><path d="M12 6l4.0 2.25" stroke="#e01818" stroke-width="1.6"/><path d="M16.75 8.75l-3.8 -1.2l1.4 -2.6z" fill="#e01818"/><circle cx="12" cy="6" r="1.8" fill="url(#icBall)" stroke="#404040" stroke-width=".4"/><path d="M2.500 9L8 15" stroke="#107010" stroke-width="3.600"/><path d="M2.500 9L8 15" stroke="#40d030" stroke-width="2"/><path d="M0 6l5.500 .500l-5 5zM10.500 18l-5.500-.500l5-5z" fill="#30c020" stroke="#107010" stroke-width=".500"/></g>
<g transform="translate(1147.0 68.0)"><rect x="0.5" y="0.8" width="5.800" height="5.500" fill="#00d8f0"/><rect x="7.0" y="0.8" width="5.800" height="5.500" fill="#f0d000"/><rect x="13.5" y="0.8" width="5.800" height="5.500" fill="#10e010"/><rect x="0.5" y="7.0" width="5.800" height="5.500" fill="#f08000"/><rect x="7.0" y="7.0" width="5.800" height="5.500" fill="#a06000"/><rect x="13.5" y="7.0" width="5.800" height="5.500" fill="#f010e0"/><rect x="0.5" y="13.200000000000001" width="5.800" height="5.500" fill="#1010e0"/><rect x="7.0" y="13.200000000000001" width="5.800" height="5.500" fill="#10a030"/><rect x="13.5" y="13.200000000000001" width="5.800" height="5.500" fill="#909090"/></g>
<g transform="translate(1175.0 68.0)"><rect x=".500" y=".500" width="15" height="18" fill="#e8f0fc" stroke="#8090a8" stroke-width="1"/><rect x="2" y="2" width="12" height="1.600" fill="#78a8f0"/><path d="M2.500 5.500h4M9 5.500h4.500" stroke="#f0a020" stroke-width="1"/><path d="M2.500 8h11" stroke="#b0d8b0" stroke-width="1"/><rect x="3.2" y="9.6" width="2.600" height="2.400" fill="#00d8f0"/><rect x="6.4" y="9.6" width="2.600" height="2.400" fill="#f0d000"/><rect x="9.600000000000001" y="9.6" width="2.600" height="2.400" fill="#10e010"/><rect x="3.2" y="12.5" width="2.600" height="2.400" fill="#f08000"/><rect x="6.4" y="12.5" width="2.600" height="2.400" fill="#a06000"/><rect x="9.600000000000001" y="12.5" width="2.600" height="2.400" fill="#f010e0"/><rect x="3.2" y="15.399999999999999" width="2.600" height="2.400" fill="#1010e0"/><rect x="6.4" y="15.399999999999999" width="2.600" height="2.400" fill="#10a030"/><rect x="9.600000000000001" y="15.399999999999999" width="2.600" height="2.400" fill="#909090"/></g>
<g transform="translate(1199.0 68.0)"><circle cx="10" cy="10" r="9.400" fill="#6c9c44" stroke="#40702c" stroke-width=".800"/><path d="M5.5 5.5l9 9" stroke="#f0f0f0" stroke-width="2.2" stroke-linecap="round"/><circle cx="5.1" cy="5.1" r="2.4" fill="none" stroke="#f0f0f0" stroke-width="1.6"/><path d="M14.5 5.0l-9 9" stroke="#4080d8" stroke-width="2.4" stroke-linecap="round"/><path d="M14.5 5.0l-3.4 3.4" stroke="#d0d0d0" stroke-width="2.2" stroke-linecap="round"/></g>
<g transform="translate(1225.0 68.0)"><rect x=".500" y=".500" width="19" height="18" fill="#dce8f8" stroke="#5070a0" stroke-width="1"/><rect x="1" y="1" width="18" height="3" fill="#4878c8"/><path d="M5 6h12" stroke="#a0a020" stroke-width="1.600" stroke-dasharray="1.600 1.200"/><path d="M3 6v11" stroke="#a05020" stroke-width="1.600" stroke-dasharray="1.600 1.200"/><path d="M8 9l9 9" stroke="#c8c8d0" stroke-width="2.2" stroke-linecap="round"/><circle cx="7.6" cy="8.6" r="2.4" fill="none" stroke="#c8c8d0" stroke-width="1.6"/><path d="M17 8.5l-9 9" stroke="#4080d8" stroke-width="2.4" stroke-linecap="round"/><path d="M17 8.5l-3.4 3.4" stroke="#d0d0d0" stroke-width="2.2" stroke-linecap="round"/></g>
<g transform="translate(1252.0 68.0)"><circle cx="1.5" cy="1.8" r=".900" fill="#203870"/><circle cx="1.5" cy="5.8999999999999995" r=".900" fill="#203870"/><circle cx="1.5" cy="10.0" r=".900" fill="#203870"/><circle cx="1.5" cy="14.1" r=".900" fill="#203870"/><circle cx="1.5" cy="18.2" r=".900" fill="#203870"/><circle cx="5.8" cy="1.8" r=".900" fill="#203870"/><circle cx="5.8" cy="18.2" r=".900" fill="#203870"/><circle cx="10.1" cy="1.8" r=".900" fill="#203870"/><circle cx="10.1" cy="18.2" r=".900" fill="#203870"/><circle cx="14.399999999999999" cy="1.8" r=".900" fill="#203870"/><circle cx="14.399999999999999" cy="18.2" r=".900" fill="#203870"/><circle cx="18.7" cy="1.8" r=".900" fill="#203870"/><circle cx="18.7" cy="5.8999999999999995" r=".900" fill="#203870"/><circle cx="18.7" cy="10.0" r=".900" fill="#203870"/><circle cx="18.7" cy="14.1" r=".900" fill="#203870"/><circle cx="18.7" cy="18.2" r=".900" fill="#203870"/><path d="M5 8q1-5 7-6.500l6.500 1v4.500l-4 .500l-3 2.500l-4 4z" fill="#f0b868" stroke="#a06820" stroke-width=".600"/><circle cx="5.500" cy="13.500" r="3" fill="#f0e020" stroke="#b0a010" stroke-width=".500"/><path d="M3.500 13.500h4M5.500 11.500v4" stroke="#2050e0" stroke-width="1.100"/></g>
<g transform="translate(1278.0 68.0)"><path d="M5 2L19 0L14 15L0 17Z" fill="#d02828" stroke="#2860d8" stroke-width="1.600"/><path d="M2 16l14 2l3-3" fill="none" stroke="#505060" stroke-width="1.200"/><path d="M8.5 1.5L3.5 16.5" stroke="#f0c0c0" stroke-width=".700"/><path d="M12.0 1.0L7.0 16.0" stroke="#f0c0c0" stroke-width=".700"/><path d="M15.5 0.5L10.5 15.5" stroke="#f0c0c0" stroke-width=".700"/><path d="M3.75 5.75L17.75 3.75" stroke="#f0c0c0" stroke-width=".700"/><path d="M2.5 9.5L16.5 7.5" stroke="#f0c0c0" stroke-width=".700"/><path d="M1.25 13.25L15.25 11.25" stroke="#f0c0c0" stroke-width=".700"/></g>
<g transform="translate(7.0 134.0)"><path d="M2 5q3-3 6-1M1 9q2-2 5-1M3 12q2-1 4 0" stroke="#b8c0d0" stroke-width="1.600" fill="none"/><path d="M7.9 11.7l-6 6.5" stroke="#a0a0a0" stroke-width="3" stroke-linecap="round"/><path d="M7.9 11.7l-6 6.5" stroke="#e0e0e0" stroke-width="1.2" stroke-linecap="round"/><circle cx="11.5" cy="7.5" r="6" fill="url(#icGlass)" stroke="#8898b8" stroke-width="1.4"/></g>
<g transform="translate(7.0 160.0)"><rect x="3" y="4" width="14" height="11" fill="url(#icPage)" stroke="#303030" stroke-width="1.200"/><path d="M0 1l4 4M0 1h3.4M0 1v3.4" stroke="#30c020" stroke-width="1.6" fill="none"/><path d="M20 1l-4 4M20 1h-3.4M20 1v3.4" stroke="#30c020" stroke-width="1.6" fill="none"/><path d="M0 18l4 -4M0 18h3.4M0 18v-3.4" stroke="#30c020" stroke-width="1.6" fill="none"/><path d="M20 18l-4 -4M20 18h-3.4M20 18v-3.4" stroke="#30c020" stroke-width="1.6" fill="none"/></g>
<g transform="translate(7.0 186.0)"><path d="M7.640000000000001 11.42l-6 6.5" stroke="#a0a0a0" stroke-width="3" stroke-linecap="round"/><path d="M7.640000000000001 11.42l-6 6.5" stroke="#e0e0e0" stroke-width="1.2" stroke-linecap="round"/><circle cx="11" cy="7.5" r="5.6" fill="url(#icGlass)" stroke="#9098a8" stroke-width="1.4"/><path d="M11 11l4.0 -2l4.0 2v5.6l-4.0 2l-4.0 -2z" fill="#505050" stroke="#202020" stroke-width=".6"/><path d="M11 11l4.0 -2l4.0 2l-4.0 2z" fill="#a8a8a8"/><path d="M15.0 13v5.6l4.0 -2v-5.6z" fill="#303030"/><path d="M0 3h4M2 1v4M0 7.500h4" stroke="#000" stroke-width="1"/><path d="M9.500 5v5l4-2.500z" fill="#b0c8e8" stroke="#7090c0" stroke-width=".500"/></g>
<g transform="translate(7.0 212.0)"><path d="M0 12L10 6L20 11L10 18Z" fill="#e4ecfc" stroke="#a0b0d0" stroke-width=".600"/><path d="M6 13v-8.549999999999999" stroke="#1060f0" stroke-width="1.6"/><path d="M6 2.5500000000000007l-2.4 3.6h4.8z" fill="#1060f0"/><path d="M6 13l7.6 -4.75" stroke="#20b020" stroke-width="1.6"/><path d="M14.549999999999999 7.300000000000001l-4 .6l2.4 2.6z" fill="#20b020"/><path d="M6 13l7.6 4.2749999999999995" stroke="#e01818" stroke-width="1.6"/><path d="M15.025 18.225l-3.8 -1.2l1.4 -2.6z" fill="#e01818"/><circle cx="6" cy="13" r="1.8" fill="url(#icBall)" stroke="#404040" stroke-width=".4"/></g>
<g transform="translate(7.0 238.0)"><path d="M1 2h12l4 3h-12z" fill="#8090f0"/><path d="M1 5h12l4 2h-12z" fill="#f4f4f4" stroke="#909090" stroke-width=".400"/><path d="M1 8h12l3 2h-12z" fill="#c0c0c8" stroke="#808080" stroke-width=".400"/><ellipse cx="11" cy="15" rx="7.500" ry="4.600" fill="#b88868" stroke="#604030" stroke-width=".600"/><circle cx="8" cy="15.500" r="1.800" fill="#2040f0"/><circle cx="12" cy="16.600" r="1.800" fill="#10c020"/><circle cx="14.600" cy="13.600" r="1.800" fill="#e01818"/><path d="M19 1L12 12" stroke="#a85820" stroke-width="1.600"/></g>
<g transform="translate(7.0 264.0)"><path d="M3.5 8.0A5.8 5.8 0 0 1 14.0 7.1" fill="none" stroke="#6c9ce0" stroke-width="4.4"/><path d="M18.8 4.3L9.3 9.9L17.0 12.2Z" fill="#6c9ce0"/><path d="M14.5 12.0A5.8 5.8 0 0 1 4.0 12.9" fill="none" stroke="#4c7cd0" stroke-width="4.4"/><path d="M-0.8 15.6L8.7 10.1L1.0 7.8Z" fill="#4c7cd0"/></g>
<g transform="translate(7.0 290.0)"><ellipse cx="10" cy="18" rx="5" ry="1.500" fill="#000" opacity=".25"/><text x="3.500" y="15" font-size="19" font-weight="bold" fill="#3c70d0" stroke="#1c3c88" stroke-width=".400">?</text></g>
<g transform="translate(7.0 316.0)"><path d="M3 5h13l-1.500 13.500h-10z" fill="#b8e0f0" stroke="#5088a8" stroke-width=".800"/><ellipse cx="9.500" cy="5" rx="6.500" ry="1.800" fill="#d8f0f8" stroke="#5088a8" stroke-width=".800"/><path d="M7 1l3 3l3-2" fill="#f0e080" stroke="#a09030" stroke-width=".500"/><path d="M6 9l2 6M10 8v8M13 9l-1.500 6" stroke="#80b040" stroke-width=".900"/></g>
<g transform="translate(7.0 342.0)"><path d="M1 1v16M3.500 1v16" stroke="#404858" stroke-width="1.400"/><circle cx="11" cy="9.500" r="6" fill="none" stroke="#a04818" stroke-width="1.400"/><circle cx="11" cy="9.500" r="2" fill="#f0a020"/><path d="M11 1.500v16M3 9.500h16M5.500 4l11 11M16.500 4l-11 11" stroke="#a04818" stroke-width="1"/><path d="M1 15q4 4 9 1l4 2l-7 2z" fill="#f08020"/></g>
<g transform="translate(34.0 134.0)"><path d="M2 1l12 18M8 1l10 14M1 8l8 11" stroke="#3888f0" stroke-width="1.800" stroke-dasharray="5 2.500"/><path d="M5 17L16 3" stroke="#402808" stroke-width="4"/><path d="M5 17L16 3" stroke="#e8a020" stroke-width="2.6"/><path d="M5 17L16 3" stroke="#f8d070" stroke-width="1"/><path d="M15 4.500l2.500-3" stroke="#e02020" stroke-width="2.600"/></g>
<g transform="translate(34.0 160.0)"><path d="M2 3q6-3 8 2q3 8 8 6q2-3-2-5q-6 0-12 8" stroke="#3070e0" stroke-width="1.800" fill="none"/><path d="M6 17L16 3" stroke="#402808" stroke-width="4"/><path d="M6 17L16 3" stroke="#e8a020" stroke-width="2.6"/><path d="M6 17L16 3" stroke="#f8d070" stroke-width="1"/></g>
<g transform="translate(34.0 186.0)"><rect x="2" y="4" width="13" height="13" fill="#fcfcd0" stroke="#e8d800" stroke-width="1.600"/><path d="M5 10l3.500 5L16 4" stroke="#20b820" stroke-width="2.800" fill="none"/></g>
<g transform="translate(34.0 212.0)"><path d="M1 6q4-6 8 4q3 8 9 4" stroke="#3070e0" stroke-width="1.800" fill="none"/><path d="M5 17L16 3" stroke="#402808" stroke-width="4"/><path d="M5 17L16 3" stroke="#e8a020" stroke-width="2.6"/><path d="M5 17L16 3" stroke="#f8d070" stroke-width="1"/></g>
<g transform="translate(34.0 238.0)"><path d="M5 3L19 1L14 16L0 18Z" fill="#a0c4f8" stroke="#2860d8" stroke-width="1.600"/><path d="M12 2L7 17M3 10.500L17 8.500" stroke="#e8f0ff" stroke-width="1.200"/></g>
<g transform="translate(34.0 264.0)"><path d="M1 6L10 2.500L19 6L10 10Z" fill="#d8d8d8" stroke="#303030" stroke-width=".600"/><path d="M1 6L10 10V19L1 15Z" fill="#909090" stroke="#303030" stroke-width=".600"/><path d="M19 6L10 10V19L19 15Z" fill="#505050" stroke="#303030" stroke-width=".600"/></g>
<g transform="translate(34.0 290.0)"><path d="M1.500 3v16M18.500 3v16" stroke="#202020" stroke-width="1.400"/><path d="M3 7.500h14" stroke="#e8d800" stroke-width="1.800"/><path d="M2 7.500l3.500-2.500v5zM18 7.500l-3.500-2.500v5z" fill="#202020"/></g>
<g transform="translate(34.0 316.0)"><g transform="translate(2 4)"><path d="M0 6L7 0V3.6Q15 4 14 13Q12.5 8.5 7 8.6V12Z" fill="#b8b8b8" stroke="#787878" stroke-width=".6"/></g></g>
<g transform="translate(34.0 342.0)"><path d="M0 1h5l1.5 2h7v10h-13.5z" fill="#e8b848" stroke="#b08020" stroke-width=".6"/><path d="M2.5 5h15l-2.5 8h-15z" fill="url(#icFold)" stroke="#b08020" stroke-width=".6"/><path d="M7 2q4-3 7 0l1-1v4h-4l1.200-1.200q-2-1.600-4 0z" fill="#20b020"/><path d="M3 10h16v9h-16z" fill="url(#icPage)" stroke="#202020" stroke-width="1"/><rect x="6" y="13" width="6" height="3" fill="#fff" stroke="#8090b0" stroke-width=".500"/></g>

<path d="M50 132.5h5l-2.5 2.6z" fill="#000"/>

<path d="M50 158.5h5l-2.5 2.6z" fill="#000"/>
<path d="M23.5 184.5h5l-2.5 2.6z" fill="#000"/>
<path d="M50 184.5h5l-2.5 2.6z" fill="#000"/>
<path d="M23.5 210.5h5l-2.5 2.6z" fill="#000"/>
<path d="M50 210.5h5l-2.5 2.6z" fill="#000"/>
<path d="M23.5 236.5h5l-2.5 2.6z" fill="#000"/>
<path d="M50 236.5h5l-2.5 2.6z" fill="#000"/>
<path d="M23.5 262.5h5l-2.5 2.6z" fill="#000"/>
<path d="M50 262.5h5l-2.5 2.6z" fill="#000"/>
<path d="M23.5 288.5h5l-2.5 2.6z" fill="#000"/>
<path d="M50 288.5h5l-2.5 2.6z" fill="#000"/>
<path d="M23.5 314.5h5l-2.5 2.6z" fill="#000"/>
<path d="M50 314.5h5l-2.5 2.6z" fill="#000"/>
<path d="M23.5 340.5h5l-2.5 2.6z" fill="#000"/>
<rect x="64" y="113" width="24" height="24" fill="#82869c"/>
<rect x="92" y="113" width="24" height="24" fill="#82869c"/>
<rect x="120" y="113" width="24" height="24" fill="#82869c"/>
<rect x="148" y="113" width="24" height="24" fill="#82869c"/>
<rect x="176" y="113" width="24" height="24" fill="#82869c"/>
<rect x="204" y="113" width="24" height="24" fill="#82869c"/>
<rect x="232" y="113" width="24" height="24" fill="#82869c"/>
<rect x="260" y="113" width="24" height="24" fill="#82869c"/>
<rect x="288" y="113" width="24" height="24" fill="#82869c"/>
<rect x="316" y="113" width="24" height="24" fill="#82869c"/>
<rect x="344" y="113" width="24" height="24" fill="#82869c"/>
<rect x="64" y="141" width="24" height="24" fill="#82869c"/>
<rect x="64" y="169" width="24" height="24" fill="#82869c"/>
<rect x="64.5" y="197.5" width="23" height="23" fill="#a89c88" stroke="#d0b060" stroke-width="1.400"/>
<rect x="64" y="225" width="24" height="24" fill="#82869c"/>
<rect x="64" y="253" width="24" height="24" fill="#82869c"/>
<g transform="translate(66.0 115.0)"><rect x="2" y="3.0" width="16" height="3.600" rx=".800" fill="#48608c" stroke="#6c84b0" stroke-width=".500"/><rect x="2" y="8.6" width="16" height="3.600" rx=".800" fill="#48608c" stroke="#6c84b0" stroke-width=".500"/><rect x="2" y="14.2" width="16" height="3.600" rx=".800" fill="#48608c" stroke="#6c84b0" stroke-width=".500"/></g>
<g transform="translate(94.0 115.0)"><rect x="5" y="5.500" width="10.500" height="9" fill="url(#icPage)" stroke="#606878" stroke-width=".800"/><path d="M1.5 2l4 4M1.5 2h3.4M1.5 2v3.4" stroke="#30c020" stroke-width="1.6" fill="none"/><path d="M18.5 2l-4 4M18.5 2h-3.4M18.5 2v3.4" stroke="#30c020" stroke-width="1.6" fill="none"/><path d="M1.5 18l4 -4M1.5 18h3.4M1.5 18v-3.4" stroke="#30c020" stroke-width="1.6" fill="none"/><path d="M18.5 18l-4 -4M18.5 18h-3.4M18.5 18v-3.4" stroke="#30c020" stroke-width="1.6" fill="none"/></g>
<g transform="translate(122.0 115.0)"><path d="M3 5q3-3 6-1M2 9q2-2 5-1M4 12q2-1 4 0" stroke="#c8d0e0" stroke-width="1.400" fill="none"/><path d="M8.64 11.92l-6 6.5" stroke="#a0a0a0" stroke-width="3" stroke-linecap="round"/><path d="M8.64 11.92l-6 6.5" stroke="#e0e0e0" stroke-width="1.2" stroke-linecap="round"/><circle cx="12" cy="8" r="5.6" fill="url(#icGlass)" stroke="#a8b4cc" stroke-width="1.4"/></g>
<g transform="translate(150.0 115.0)"><path d="M1 12L10 7L19 12L10 17Z" fill="none" stroke="#606060" stroke-width=".600"/><path d="M9 12.5v-8.1" stroke="#1060f0" stroke-width="1.6"/><path d="M9 2.5999999999999996l-2.4 3.6h4.8z" fill="#1060f0"/><path d="M9 12.5l7.2 -4.5" stroke="#20b020" stroke-width="1.6"/><path d="M17.1 7.1l-4 .6l2.4 2.6z" fill="#20b020"/><path d="M9 12.5l7.2 4.05" stroke="#e01818" stroke-width="1.6"/><path d="M17.55 17.45l-3.8 -1.2l1.4 -2.6z" fill="#e01818"/><circle cx="9" cy="12.5" r="1.8" fill="url(#icBall)" stroke="#404040" stroke-width=".4"/></g>
<g transform="translate(176.0 113.0)"><path d="M12.2 3.4L21.6 6.6V15.9L12.2 21.7L3.1 15.9V6.6ZM3.1 6.6L12.2 10.6L21.6 6.6M12.2 3.4V21.7M3.1 15.9L12.2 12.5L21.6 15.9" fill="none" stroke="#000" stroke-width="1" stroke-linejoin="round"/><path d="M3.1 6.6 12.2 3.4 21.6 6.6 12.2 10.6Z" fill="url(#icGrn)" stroke="#20b018" stroke-width=".7"/></g>
<g transform="translate(204.0 113.0)"><path d="M12.2 3.4L21.6 6.6V15.9L12.2 21.7L3.1 15.9V6.6ZM3.1 6.6L12.2 10.6L21.6 6.6M12.2 3.4V21.7M3.1 15.9L12.2 12.5L21.6 15.9" fill="none" stroke="#000" stroke-width="1" stroke-linejoin="round"/><path d="M3.1 15.9 12.2 12.5 21.6 15.9 12.2 21.7Z" fill="url(#icGrn)" stroke="#20b018" stroke-width=".7"/></g>
<g transform="translate(232.0 113.0)"><path d="M12.2 3.4L21.6 6.6V15.9L12.2 21.7L3.1 15.9V6.6ZM3.1 6.6L12.2 10.6L21.6 6.6M12.2 3.4V21.7M3.1 15.9L12.2 12.5L21.6 15.9" fill="none" stroke="#000" stroke-width="1" stroke-linejoin="round"/><path d="M3.1 6.6 12.2 3.4 12.2 12.5 3.1 15.9Z" fill="url(#icGrn)" stroke="#20b018" stroke-width=".7"/></g>
<g transform="translate(260.0 113.0)"><path d="M12.2 3.4L21.6 6.6V15.9L12.2 21.7L3.1 15.9V6.6ZM3.1 6.6L12.2 10.6L21.6 6.6M12.2 3.4V21.7M3.1 15.9L12.2 12.5L21.6 15.9" fill="none" stroke="#000" stroke-width="1" stroke-linejoin="round"/><path d="M12.2 10.6 21.6 6.6 21.6 15.9 12.2 21.7Z" fill="url(#icGrn)" stroke="#20b018" stroke-width=".7"/></g>
<g transform="translate(288.0 113.0)"><path d="M12.2 3.4L21.6 6.6V15.9L12.2 21.7L3.1 15.9V6.6ZM3.1 6.6L12.2 10.6L21.6 6.6M12.2 3.4V21.7M3.1 15.9L12.2 12.5L21.6 15.9" fill="none" stroke="#000" stroke-width="1" stroke-linejoin="round"/><path d="M3.1 6.6 12.2 10.6 12.2 21.7 3.1 15.9Z" fill="url(#icGrn)" stroke="#20b018" stroke-width=".7"/></g>
<g transform="translate(316.0 113.0)"><path d="M12.2 3.4L21.6 6.6V15.9L12.2 21.7L3.1 15.9V6.6ZM3.1 6.6L12.2 10.6L21.6 6.6M12.2 3.4V21.7M3.1 15.9L12.2 12.5L21.6 15.9" fill="none" stroke="#000" stroke-width="1" stroke-linejoin="round"/><path d="M12.2 3.4 21.6 6.6 21.6 15.9 12.2 12.5Z" fill="url(#icGrn)" stroke="#20b018" stroke-width=".7"/></g>
<g transform="translate(344.0 113.0)"><path d="M3.1 6.6 12.2 3.4 21.6 6.6 12.2 10.6Z" fill="#58e838"/><path d="M3.1 6.6 12.2 10.6 12.2 21.7 3.1 15.9Z" fill="#30c820"/><path d="M12.2 10.6 21.6 6.6 21.6 15.9 12.2 21.7Z" fill="#20a818"/><path d="M12.2 3.4L21.6 6.6V15.9L12.2 21.7L3.1 15.9V6.6ZM3.1 6.6L12.2 10.6L21.6 6.6M12.2 10.6V21.7" fill="none" stroke="#109010" stroke-width=".7"/></g>
<g transform="translate(70.5 144.5)"><path d="M0 2.6V14.4A5.5 2.6 0 0 0 11 14.4V2.6" fill="none" stroke="#101010" stroke-width="1.1"/><ellipse cx="5.5" cy="2.6" rx="5.5" ry="2.6" fill="none" stroke="#101010" stroke-width="1.1"/><path d="M0 14.4A5.5 2.6 0 0 1 11 14.4" fill="none" stroke="#101010" stroke-width=".7"/></g>
<g transform="translate(70.5 172.5)"><path d="M0 2.6V14.4A5.5 2.6 0 0 0 11 14.4V2.6" fill="none" stroke="#101010" stroke-width="1.1"/><ellipse cx="5.5" cy="2.6" rx="5.5" ry="2.6" fill="none" stroke="#101010" stroke-width="1.1"/></g>
<g transform="translate(70.5 200.5)"><path d="M0 2.6V14.4A5.5 2.6 0 0 0 11 14.4V2.6" fill="url(#icBlue)" stroke="#101010" stroke-width="1.1"/><ellipse cx="5.5" cy="2.6" rx="5.5" ry="2.6" fill="#88a8e8" stroke="#101010" stroke-width="1.1"/></g>
<g transform="translate(70.5 228.5)"><path d="M0 2.6V14.4A5.5 2.6 0 0 0 11 14.4V2.6" fill="url(#icPale)" stroke="#505868" stroke-width="1"/><ellipse cx="5.5" cy="2.6" rx="5.5" ry="2.6" fill="#f0f4fc" stroke="#505868" stroke-width="1"/></g>
<g transform="translate(70.5 256.5)"><path d="M0 2.6V14.4A5.5 2.6 0 0 0 11 14.4V2.6" fill="none" stroke="#181818" stroke-width="1"/><ellipse cx="5.5" cy="2.6" rx="5.5" ry="2.6" fill="none" stroke="#181818" stroke-width="1"/><path d="M2 3l3 13M5 3l-2 13M8 3l-2 13M6 3l4 13M10 3l-3 13" stroke="#181818" stroke-width=".600" fill="none"/></g>
<rect x="1182.5" y="1022.500" width="15" height="15" fill="#d8c8d0" stroke="#707888" stroke-width="1"/>
<g transform="translate(1183.0 1023.0)"><path d="M3.1 5.6A4.2 4.2 0 0 1 10.6 4.9" fill="none" stroke="#e04858" stroke-width="2.4"/><path d="M13.2 3.4L8.0 6.4L12.3 7.7Z" fill="#e04858"/><path d="M10.9 8.4A4.2 4.2 0 0 1 3.4 9.1" fill="none" stroke="#e04858" stroke-width="2.4"/><path d="M0.8 10.6L6.0 7.6L1.7 6.3Z" fill="#e04858"/></g>
<rect x="1212" y="1021.500" width="18" height="17.500" fill="#fce690"/>
<g transform="translate(1213.0 1023.0)"><path d="M2 1l3 3l3-3l1 4l4 0l-3 3l2 4l-10-2z" fill="#f090d0" stroke="#d050a0" stroke-width=".500"/><path d="M7 5v9.500l2.500-2.500l2 4l1.800-.800l-2-4h3.500z" fill="#f8f8f8" stroke="#404040" stroke-width=".700"/></g>
<g transform="translate(1246.0 1023.0)"><path d="M1 7L8 1L15 7" fill="#f0b868" stroke="#a06820" stroke-width=".800"/><rect x="3" y="7" width="10" height="8" fill="#e8f0fc" stroke="#5070a0" stroke-width=".800"/><path d="M5 9v5M8 9v5M11 9v5M3.500 11.500h9" stroke="#4878c8" stroke-width=".800"/></g>
<g transform="translate(1277.0 1022.0)"><ellipse cx="7" cy="16" rx="5" ry="1.300" fill="#000" opacity=".250"/><text x="1.500" y="14" font-size="17" font-weight="bold" fill="#3c70d0">?</text></g>
<g transform="translate(1305.0 1023.0)"><path d="M3 2l4-1.500l4 1.500v4l-4 1.500l-4-1.500z" fill="#6898e8" stroke="#2850a0" stroke-width=".600"/><path d="M9 8l4-1.500l4 1.500v4.500l-4 1.500l-4-1.500z" fill="#485868" stroke="#182028" stroke-width=".600"/><path d="M9 8l4 1.500l4-1.500M13 9.500v4.500" stroke="#a0b0c0" stroke-width=".600" fill="none"/><path d="M0 10.500h6l-2-2.500M6 10.500l-2 2.500M1 7l4 3M1 14l4-3" stroke="#e01010" stroke-width="1.300" fill="none"/></g>
<rect x="1336.5" y="1021.500" width="18" height="17.500" fill="#fce690"/>
<g transform="translate(1338.0 1023.0)"><path d="M1 4L8 1.500L15 4L8 6.500Z" fill="#e850e0" stroke="#282828" stroke-width=".700"/><path d="M1 4L8 6.500V15L1 12Z" fill="#7888b8" stroke="#282828" stroke-width=".700"/><path d="M15 4L8 6.500V15L15 12Z" fill="#78c8c0" stroke="#282828" stroke-width=".700"/></g>
<g transform="translate(1371.0 1022.0)"><rect x=".500" y=".500" width="9" height="16" fill="#f0f0e8" stroke="#606858" stroke-width="1"/><path d="M1 5h8M1 12.500h8" stroke="#606858" stroke-width=".800"/><rect x="1.500" y="6.500" width="7" height="2.500" fill="#f0a030"/></g>
<g transform="translate(1399.0 1023.0)"><path d="M8 2.800A6 6 0 1 1 2.600 6" fill="none" stroke="#20a020" stroke-width="2"/><path d="M3.800 2.800l5-3.400v6.600z" fill="#20a020"/><path d="M5.500 8.500h4M7.500 6.500v4" stroke="#2838a0" stroke-width="1.300"/></g>
<g transform="translate(1430.0 1022.0)"><rect x=".800" y=".800" width="14.500" height="15" fill="#e8ecf8" stroke="#505868" stroke-width="1.300"/><path d="M8 1v15M1 8.500h14.500" stroke="#505868" stroke-width="1.300"/></g>
<circle cx="1900.5" cy="1009.5" r="6.500" fill="#1838c8" stroke="#102060" stroke-width=".600"/><path d="M1896 1006q3-3 6-2q1 3-2 4q-1 3-3 2zM1902 1011q3-1 4 0q-1 3-4 4z" fill="#30c030"/>
</g>
<rect x="96" y="915.5" width="32.500" height="24" fill="#8094b8" fill-opacity=".45" stroke="#c8ccd8" stroke-width=".800"/>
<path d="M102 915.500v2M122 915.500v2" stroke="#c8ccd8" stroke-width=".800"/>
<path d="M120 941V875" stroke="#00e0e8" stroke-width="3"/><path d="M120 865l-3.800 11.500h7.600z" fill="#00e0e8"/>
<path d="M120 941.300L84 940.500" stroke="#10e010" stroke-width="3"/><path d="M72.500 940l10.500-4.200v8.600z" fill="#10e010"/><path d="M90 943h28" stroke="#087008" stroke-width="1"/>
<circle cx="128.500" cy="940.500" r="3.400" fill="#f01010"/><path d="M122 941.300l5-.800" stroke="#801010" stroke-width="2.400"/>
<circle cx="120" cy="941.300" r="4" fill="url(#icBall)" stroke="#303030" stroke-width=".400"/>
<text x="113.800" y="865" font-size="12.500" fill="#d0d0d0">Z</text>
<path d="M62.500 935.500l3.200 5.500l3.200-5.500M65.700 941v5" stroke="#f01010" stroke-width="1.100" fill="none"/>
<path d="M130 935.500l7 9M137 935.500l-7 9" stroke="#f01010" stroke-width="1.100" fill="none"/>
<rect x="1830" y="863.500" width="73" height="40" rx="17" fill="#262e42" stroke="#384058" stroke-width=".800"/>
<path d="M1843 883.500h56" stroke="#384058" stroke-width=".800"/>
<circle cx="1813.700" cy="884.500" r="28.600" fill="#2c3448" stroke="#4c546c" stroke-width="1.200"/>
<defs><linearGradient id="arcg" x1="1" y1="0" x2="0" y2="1"><stop offset="0" stop-color="#30d8a0"/><stop offset="1" stop-color="#f0d838"/></linearGradient></defs>
<path d="M1830 863.500A26.500 26.500 0 0 1 1800 907.500" fill="none" stroke="url(#arcg)" stroke-width="1.400"/>
<text x="1796" y="892" font-size="25" fill="#e8e8ec" stroke="#2c3448" stroke-width=".7" textLength="27" lengthAdjust="spacingAndGlyphs">59</text><text x="1824" y="892" font-size="10" fill="#e8e8ec">%</text>
<path d="M1849 869v6M1846.500 871.500l2.500-2.500l2.500 2.500" stroke="#40a8f0" stroke-width="1.300" fill="none"/>
<path d="M1849 889v6M1846.500 892.500l2.500 2.500l2.500-2.500" stroke="#28c040" stroke-width="1.300" fill="none"/>
<text x="1862.500" y="877" font-size="10.500" font-weight="bold" fill="#f0f0f0" textLength="16">0.8</text><text x="1879" y="877" font-size="9" fill="#b0b4c0" textLength="15">K/s</text>
<text x="1862.500" y="898" font-size="10.500" font-weight="bold" fill="#f0f0f0" textLength="16">0.4</text><text x="1879" y="898" font-size="9" fill="#b0b4c0" textLength="15">K/s</text>
<rect x="1748" y="793.700" width="156" height="69.500" rx="9" fill="#b8d8f0" fill-opacity=".9" stroke="#7cb4e0" stroke-width="1"/>
<rect x="1731.500" y="800" width="170" height="58.500" rx="8" fill="#fff" stroke="#2484c4" stroke-width="1.600"/>
<text x="1743" y="825" font-size="23" font-weight="bold" fill="#000">A</text>
<path d="M1783 811a8.300 8.300 0 1 1 -8.800 11.500a7 7 0 0 0 8.800-11.500z" fill="#000"/>
<path d="M1746.500 837l1.600 .300l-1.600 3.600h-1.200z" fill="#000"/><rect x="1758.500" y="849" width="1.800" height="1.800" fill="#000"/>
<path d="M1772 839.500l5-1.800h9.500l5 1.800v4.500h-4v8.500h-11.500v-8.500h-4z" fill="#000"/>
<circle cx="1893.600" cy="822.500" r="4.800" fill="#e8102c"/>
<path d="M1858 830q22-16 40 6q8 14 0 26h-44z" fill="#0c9ce4" stroke="#0870a8" stroke-width=".600"/>
<path d="M1893 846q14-8 22 2q6 10-8 13h-22q-2-8 8-15z" fill="#fff" stroke="#a0a0a0" stroke-width=".600"/>
<ellipse cx="1840.500" cy="827" rx="33.500" ry="33" fill="#0c9ce4" stroke="#0870a8" stroke-width=".700"/>
<ellipse cx="1834" cy="832.500" rx="27.500" ry="24.500" fill="#fff" stroke="#707070" stroke-width=".500"/>
<ellipse cx="1836.500" cy="804.500" rx="8.500" ry="9.500" fill="#fff" stroke="#505050" stroke-width=".600" transform="rotate(-12 1836 804)"/>
<ellipse cx="1850" cy="811" rx="8.500" ry="9.500" fill="#fff" stroke="#505050" stroke-width=".600" transform="rotate(-12 1850 811)"/>
<path d="M1834 806q3 3 6-1" fill="none" stroke="#000" stroke-width="1"/><ellipse cx="1844.500" cy="810.500" rx="1.600" ry="2.400" fill="#000"/>
<circle cx="1835" cy="814.500" r="4.600" fill="#e8102c"/><circle cx="1833.800" cy="813" r="1.200" fill="#fff"/>
<path d="M1833 819q-4 14-8 22M1814 834q20 14 44 2" fill="none" stroke="#505050" stroke-width=".600"/>
<path d="M1809 811l14 6M1808 819h14M1810 827l13-3M1841 826l16-2M1841 830l18 4M1840 834l14 8" stroke="#505050" stroke-width=".500"/>
<ellipse cx="1813" cy="841.500" rx="6.500" ry="7.500" fill="#fff" stroke="#707070" stroke-width=".500"/>
<ellipse cx="1848" cy="853.500" rx="8.500" ry="7" fill="#fff" stroke="#707070" stroke-width=".500"/>
<path d="M1824 852q6 6 14 6" fill="none" stroke="#d01020" stroke-width="2.200"/>
<circle cx="1833.600" cy="859.500" r="4.800" fill="#f0d020" stroke="#907808" stroke-width=".600"/><circle cx="1833.600" cy="861" r="1.200" fill="#604808"/>
</svg>
</body></html>
